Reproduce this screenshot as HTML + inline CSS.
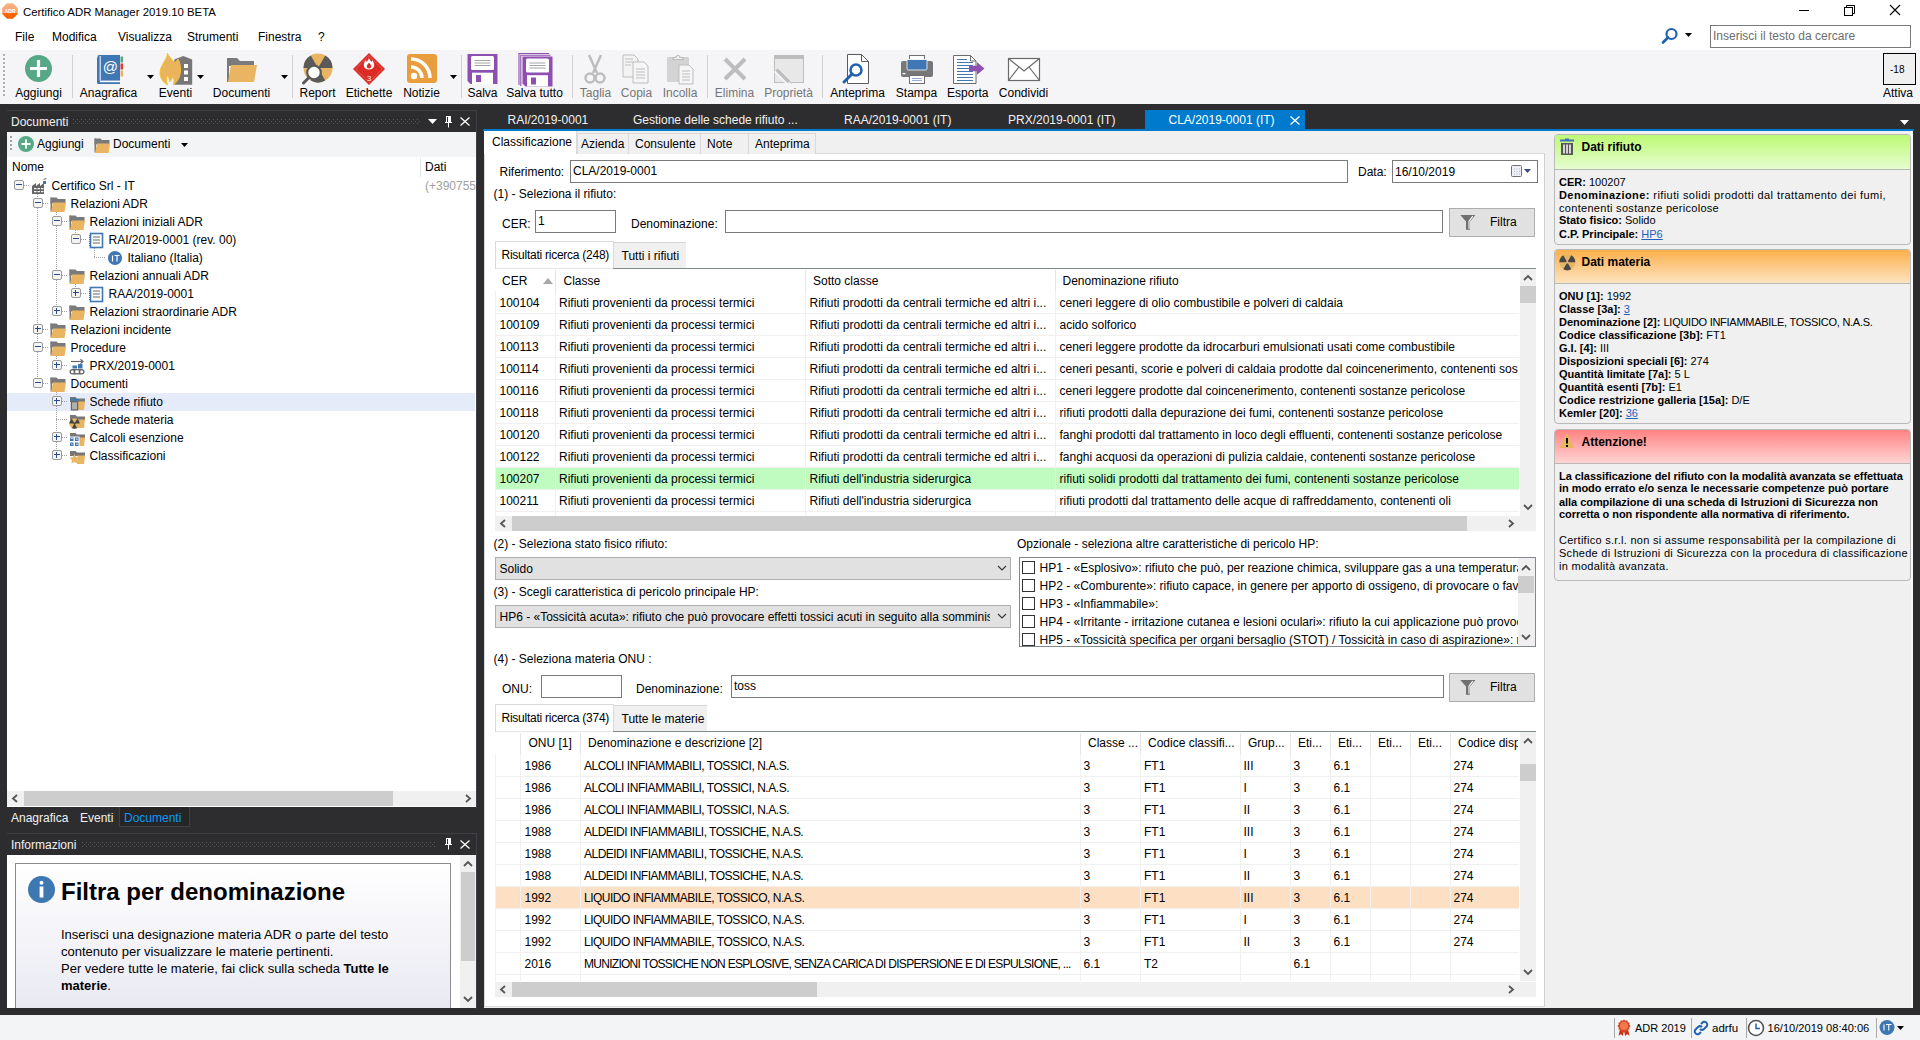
<!DOCTYPE html><html><head><meta charset="utf-8"><title>Certifico ADR Manager</title><style>
*{margin:0;padding:0;box-sizing:border-box}
html,body{width:1920px;height:1040px;overflow:hidden;background:#2d2d30;font-family:"Liberation Sans",sans-serif;font-size:12px;color:#000}
.a{position:absolute}
.t{position:absolute;white-space:nowrap;line-height:16px}
.clip{position:absolute;overflow:hidden}
svg{display:block}
</style></head><body><div class="a" style="left:0px;top:0px;width:1920px;height:50px;background:#fff"></div><svg class="a" style="left:2px;top:3px" width="16" height="16" viewBox="0 0 16 16"><defs><linearGradient id="gi" x1="0" y1="0" x2="0" y2="1"><stop offset="0" stop-color="#fbb68a"/><stop offset="0.6" stop-color="#f79a5e"/><stop offset="0.62" stop-color="#ff6a0a"/><stop offset="1" stop-color="#f06005"/></linearGradient></defs><path d="M5 0.3H11L15.7 5V11L11 15.7H5L0.3 11V5z" fill="url(#gi)"/><text x="8" y="9.6" font-size="5.2" font-family="Liberation Sans" font-weight="700" fill="#fff" text-anchor="middle">ADR</text></svg><div class="t" style="left:23px;top:4.05px;font-size:11.4px;color:#000;font-weight:400;">Certifico ADR Manager 2019.10 BETA</div><div class="a" style="left:1799px;top:10px;width:10px;height:1px;background:#000"></div><svg class="a" style="left:1843px;top:4px" width="13" height="12" viewBox="0 0 13 12"><rect x="1.5" y="3.5" width="8" height="8" fill="none" stroke="#000"/><path d="M3.5 3.5V1.5h8v8h-2" fill="none" stroke="#000"/></svg><svg class="a" style="left:1889px;top:4px" width="12" height="12" viewBox="0 0 12 12"><path d="M1 1L11 11M11 1L1 11" stroke="#000" stroke-width="1.1"/></svg><div class="t" style="left:15px;top:28.84px;font-size:12px;color:#000;font-weight:400;">File</div><div class="t" style="left:52px;top:28.84px;font-size:12px;color:#000;font-weight:400;">Modifica</div><div class="t" style="left:118px;top:28.84px;font-size:12px;color:#000;font-weight:400;">Visualizza</div><div class="t" style="left:187px;top:28.84px;font-size:12px;color:#000;font-weight:400;">Strumenti</div><div class="t" style="left:258px;top:28.84px;font-size:12px;color:#000;font-weight:400;">Finestra</div><div class="t" style="left:318px;top:28.84px;font-size:12px;color:#000;font-weight:400;">?</div><svg class="a" style="left:1661px;top:27px" width="18" height="18" viewBox="0 0 18 18"><circle cx="10.5" cy="7" r="5" fill="none" stroke="#1f63b0" stroke-width="2.2"/><path d="M7 10.5L2 15.5" stroke="#1f63b0" stroke-width="2.8" stroke-linecap="round"/></svg><svg class="a" style="left:1685px;top:33px" width="7" height="4" viewBox="0 0 7 4"><path d="M0 0H7L3.5 4z" fill="#000"/></svg><div class="a" style="left:1710px;top:25px;width:201px;height:23px;border:1px solid #7a7a7a;background:#fff"></div><div class="t" style="left:1713px;top:27.84px;font-size:12px;color:#6d6d6d;font-weight:400;">Inserisci il testo da cercare</div><div class="a" style="left:0px;top:50px;width:1920px;height:54px;background:#f5f5f7"></div><div class="a" style="left:3px;top:54px;width:2px;height:42px;background:repeating-linear-gradient(#b0b0b0 0 2px,transparent 2px 4px)"></div><div class="a" style="left:72px;top:55px;width:1px;height:43px;background:#d0d0d4"></div><div class="a" style="left:292px;top:55px;width:1px;height:43px;background:#d0d0d4"></div><div class="a" style="left:461px;top:55px;width:1px;height:43px;background:#d0d0d4"></div><div class="a" style="left:572px;top:55px;width:1px;height:43px;background:#d0d0d4"></div><div class="a" style="left:707px;top:55px;width:1px;height:43px;background:#d0d0d4"></div><div class="a" style="left:822px;top:55px;width:1px;height:43px;background:#d0d0d4"></div><svg class="a" style="left:23px;top:53px" width="32" height="32" viewBox="0 0 32 32"><circle cx="15.5" cy="15.5" r="13.5" fill="#57a886"/><path d="M15.5 7v17M7 15.5h17" stroke="#fff" stroke-width="3.2"/></svg><div class="t" style="left:-21.5px;width:120px;text-align:center;top:85px"><span style="color:#000">Aggiungi</span></div><svg class="a" style="left:95px;top:53px" width="32" height="32" viewBox="0 0 32 32"><path d="M2.5 3.5a1.5 1.5 0 0 1 1.5-1.5H25v26H4a1.5 1.5 0 0 0-1.5 1.5z" fill="#3f77b5"/><path d="M2 5v24.5a1.5 1.5 0 0 0 1.5 1.5H25v-2.5H5V3z" fill="#3f77b5"/><rect x="5" y="27.6" width="20" height="1.6" fill="#fff"/><path d="M5.2 3v24.5" stroke="#fff" stroke-width="1"/><rect x="25.5" y="3.5" width="2.6" height="6" fill="#57a886"/><rect x="25.5" y="10.5" width="2.6" height="6" fill="#d9412c"/><rect x="25.5" y="17.5" width="2.6" height="6" fill="#e9b563"/><text x="15.3" y="18.6" font-size="15" font-family="Liberation Sans" fill="#fff" text-anchor="middle">@</text></svg><div class="t" style="left:48.5px;width:120px;text-align:center;top:85px"><span style="color:#000">Anagrafica</span></div><svg class="a" style="left:147px;top:75px" width="7" height="4" viewBox="0 0 7 4"><path d="M0 0H7L3.5 4z" fill="#000"/></svg><svg class="a" style="left:159px;top:52px" width="34" height="34" viewBox="0 0 34 34"><path d="M15.3 7.4L24.3 4L33.2 7.4V32.7H15.3z" fill="#777"/><rect x="25" y="12" width="4" height="4" fill="#fff"/><rect x="25" y="18.5" width="4" height="4" fill="#fff"/><rect x="25" y="25" width="4" height="4" fill="#fff"/><path d="M8.5 1.2C10 5 13 7.5 15.5 10.5c1.5-1 3-2.5 3.5-3.5 2 3 2.8 8 2.5 12-.3 5.5-2.5 10.5-7.2 14 .8-3 1-6-.3-8.5-1 2.5-2 4-3.5 5.5 0-2.5-.5-4.5-2-6.5C7 26 7.5 30 8.5 33c-4.5-2.5-7.3-7-7.5-11.5-.2-5 2.5-9 4.5-12.5 1.5-2.5 3-5 3-7.8z" fill="#eab35c" stroke="#f3c230" stroke-width="0.9"/></svg><div class="t" style="left:115.5px;width:120px;text-align:center;top:85px"><span style="color:#000">Eventi</span></div><svg class="a" style="left:197px;top:75px" width="7" height="4" viewBox="0 0 7 4"><path d="M0 0H7L3.5 4z" fill="#000"/></svg><svg class="a" style="left:226px;top:53px" width="32" height="32" viewBox="0 0 32 32"><path d="M1 5h10l3 3h14v5H1z" fill="#7a7a7a"/><path d="M1 5h2v24H1z" fill="#7a7a7a"/><path d="M5 12h26l-3 17H2z" fill="#e9b563"/></svg><div class="t" style="left:181.5px;width:120px;text-align:center;top:85px"><span style="color:#000">Documenti</span></div><svg class="a" style="left:281px;top:75px" width="7" height="4" viewBox="0 0 7 4"><path d="M0 0H7L3.5 4z" fill="#000"/></svg><svg class="a" style="left:301px;top:53px" width="32" height="32" viewBox="0 0 32 32"><circle cx="17" cy="15" r="14.5" fill="#e9b563"/><path d="M17 15L2.50 15.00A14.5 14.5 0 0 1 9.75 2.44z" fill="#5a5a5a"/><path d="M17 15L24.25 2.44A14.5 14.5 0 0 1 31.50 15.00z" fill="#5a5a5a"/><path d="M17 15L24.25 27.56A14.5 14.5 0 0 1 9.75 27.56z" fill="#5a5a5a"/><circle cx="13" cy="19.5" r="6.8" fill="#fff" stroke="#5a5a5a" stroke-width="2.2"/><path d="M8 24.5L2.5 30" stroke="#5a5a5a" stroke-width="3" stroke-linecap="round"/></svg><div class="t" style="left:257.5px;width:120px;text-align:center;top:85px"><span style="color:#000">Report</span></div><svg class="a" style="left:353px;top:53px" width="32" height="32" viewBox="0 0 32 32"><path d="M16 0L32 16L16 32L0 16z" fill="#dc2a24"/><path d="M16 2.6L29.4 16L16 29.4L2.6 16z" fill="none" stroke="#f3a0a0" stroke-width="0.7" stroke-dasharray="1 0.8"/><path d="M16 4.5c.3 2.2 1.5 3 2.6 4.5.3-.8.4-1.5.4-2 1.6 1.8 2.4 3.6 2.2 5.6-.3 2.4-2.3 4-5.2 4s-5-1.6-5.2-4c-.2-2 .7-3.8 2.2-5.6 0 .7.2 1.3.5 2 1-1.5 2.3-2.4 2.5-4.5z" fill="#fff"/><path d="M16 9.8c1.3 1.3 2.4 2.6 2.2 4-.2 1-1 1.6-2.2 1.6s-2-.6-2.2-1.6c-.2-1.4.9-2.7 2.2-4z" fill="#dc2a24"/><text x="16.2" y="27.5" font-size="7.5" font-family="Liberation Sans" fill="#fff" text-anchor="middle">3</text></svg><div class="t" style="left:309px;width:120px;text-align:center;top:85px"><span style="color:#000">Etichette</span></div><svg class="a" style="left:406px;top:53px" width="32" height="32" viewBox="0 0 32 32"><rect x="1" y="1" width="30" height="29" rx="3" fill="#e99d3c"/><circle cx="8" cy="23" r="3.2" fill="#fff"/><path d="M5 14a11 11 0 0 1 11 11" fill="none" stroke="#fff" stroke-width="3.5"/><path d="M5 6a19 19 0 0 1 19 19" fill="none" stroke="#fff" stroke-width="3.5"/></svg><div class="t" style="left:361.5px;width:120px;text-align:center;top:85px"><span style="color:#000">Notizie</span></div><svg class="a" style="left:450px;top:75px" width="7" height="4" viewBox="0 0 7 4"><path d="M0 0H7L3.5 4z" fill="#000"/></svg><svg class="a" style="left:466px;top:53px" width="34" height="34" viewBox="0 0 34 34"><path d="M1.5 1H31.5V31H4.5L1.5 28z" fill="#8e4fb0"/><rect x="5.0" y="3" width="23" height="14" rx="1.5" fill="#fff"/><path d="M8.5 7.5h16M8.5 10h16M8.5 12.5h16" stroke="#9a9a9a" stroke-width="0.9"/><rect x="6.0" y="19.7" width="21" height="11.3" fill="#fff"/><rect x="10.0" y="22" width="5" height="7" fill="#8e4fb0"/></svg><div class="t" style="left:422.5px;width:120px;text-align:center;top:85px"><span style="color:#000">Salva</span></div><svg class="a" style="left:518px;top:52px" width="36" height="36" viewBox="0 0 36 36"><path d="M1 33V1.5H31" fill="none" stroke="#8e4fb0" stroke-width="1.1"/><path d="M2.8 34V3.3H32.5" fill="none" stroke="#8e4fb0" stroke-width="1.1"/><path d="M4.5 4.5H34.5V34.5H7.5L4.5 31.5z" fill="#8e4fb0"/><rect x="8.0" y="6.5" width="23" height="14" rx="1.5" fill="#fff"/><path d="M11.5 11.0h16M11.5 13.5h16M11.5 16.0h16" stroke="#9a9a9a" stroke-width="0.9"/><rect x="9.0" y="23.2" width="21" height="11.3" fill="#fff"/><rect x="13.0" y="25.5" width="5" height="7" fill="#8e4fb0"/></svg><div class="t" style="left:474.5px;width:120px;text-align:center;top:85px"><span style="color:#000">Salva tutto</span></div><svg class="a" style="left:579px;top:53px" width="32" height="32" viewBox="0 0 32 32"><path d="M10 2L18 20M22 2L14 20" stroke="#bdbdbd" stroke-width="2.5"/><circle cx="11" cy="25" r="4.5" fill="none" stroke="#bdbdbd" stroke-width="2.5"/><circle cx="21" cy="25" r="4.5" fill="none" stroke="#bdbdbd" stroke-width="2.5"/></svg><div class="t" style="left:535.5px;width:120px;text-align:center;top:85px"><span style="color:#767676">Taglia</span></div><svg class="a" style="left:621px;top:53px" width="32" height="32" viewBox="0 0 32 32"><path d="M2 2h11l4 4v18H2z" fill="#f3f3f3" stroke="#bdbdbd"/><path d="M12 9h11l4 4v17H12z" fill="#f5f5f7" stroke="#bdbdbd"/><path d="M4 6h8M4 9h8M4 12h6M15 16h9M15 19h9M15 22h9M15 25h9" stroke="#bdbdbd"/></svg><div class="t" style="left:576.5px;width:120px;text-align:center;top:85px"><span style="color:#767676">Copia</span></div><svg class="a" style="left:665px;top:53px" width="32" height="32" viewBox="0 0 32 32"><rect x="2" y="4" width="22" height="25" rx="1" fill="#d3d3d3"/><path d="M8 6.5h10v-2h-3a2 2 0 0 0-4 0h-3z" fill="#f5f5f7" stroke="#b8b8b8" stroke-width="1.2"/><path d="M14 12h10l4 4v15H14z" fill="#f5f5f7" stroke="#bdbdbd"/><path d="M17 18h8M17 21h8M17 24h8M17 27h8" stroke="#bdbdbd"/></svg><div class="t" style="left:620px;width:120px;text-align:center;top:85px"><span style="color:#767676">Incolla</span></div><svg class="a" style="left:719px;top:53px" width="32" height="32" viewBox="0 0 32 32"><path d="M6 6L26 26M26 6L6 26" stroke="#bdbdbd" stroke-width="4"/></svg><div class="t" style="left:674.5px;width:120px;text-align:center;top:85px"><span style="color:#767676">Elimina</span></div><svg class="a" style="left:773px;top:53px" width="32" height="32" viewBox="0 0 32 32"><rect x="1.5" y="2.5" width="29" height="27" fill="#e8e8e8" stroke="#bdbdbd"/><rect x="1" y="2" width="30" height="4" fill="#bdbdbd"/><path d="M3 17L17 31" stroke="#f5f5f7" stroke-width="6"/><path d="M3.5 16.5L16 29" stroke="#bdbdbd" stroke-width="3.5"/><path d="M16 29l3 2-1-3z" fill="#bdbdbd"/></svg><div class="t" style="left:728.5px;width:120px;text-align:center;top:85px"><span style="color:#767676">Proprietà</span></div><svg class="a" style="left:840px;top:53px" width="32" height="32" viewBox="0 0 32 32"><path d="M7.5 1.5h14l7 7v22h-21z" fill="#fff" stroke="#5a5a5a"/><path d="M21.5 1.5v7h7" fill="none" stroke="#5a5a5a"/><circle cx="16" cy="17" r="5.5" fill="none" stroke="#1f63b0" stroke-width="2.5"/><path d="M12 21L4 29" stroke="#1f63b0" stroke-width="3" stroke-linecap="round"/></svg><div class="t" style="left:797.5px;width:120px;text-align:center;top:85px"><span style="color:#000">Anteprima</span></div><svg class="a" style="left:900px;top:53px" width="34" height="32" viewBox="0 0 34 32"><rect x="9.5" y="2.5" width="15" height="6" fill="#fff" stroke="#6f6f6f"/><rect x="1" y="8" width="32" height="16" rx="2" fill="#777"/><path d="M7 6.5h20v9a1.5 1.5 0 0 1-1.5 1.5h-17A1.5 1.5 0 0 1 7 15.5z" fill="#3f77b5" stroke="#fff" stroke-width="0.8"/><rect x="2.5" y="20" width="3" height="1.2" fill="#fff"/><rect x="9.5" y="22.5" width="15" height="8" fill="#fff" stroke="#6f6f6f"/><path d="M12 25.5h10M12 27.5h10" stroke="#8fb0d8"/></svg><div class="t" style="left:856.5px;width:120px;text-align:center;top:85px"><span style="color:#000">Stampa</span></div><svg class="a" style="left:952px;top:53px" width="34" height="32" viewBox="0 0 34 32"><path d="M1.5 2.5h17l5.5 5.5v22.5H1.5z" fill="#fff" stroke="#6a6a6a"/><path d="M18.5 2.5v5.5h5.5" fill="none" stroke="#6a6a6a"/><path d="M5 6.5h10M5 9.5h16M5 12.5h16M5 15.5h16M5 18.5h16M5 21.5h16M5 24.5h16M5 27.5h16" stroke="#3f77b5" stroke-width="1"/><path d="M17 12.8h8v-3.5l7.5 6.2-7.5 6.2v-3.5h-8z" fill="#8e4fb0"/></svg><div class="t" style="left:907.75px;width:120px;text-align:center;top:85px"><span style="color:#000">Esporta</span></div><svg class="a" style="left:1007px;top:57px" width="34" height="26" viewBox="0 0 34 26"><rect x="1.5" y="1.5" width="31" height="22" fill="#fff" stroke="#6a6a6a" stroke-width="1.2"/><path d="M1.5 1.5L17 14L32.5 1.5M1.5 23.5L12 10M32.5 23.5L22 10" fill="none" stroke="#6a6a6a" stroke-width="1.2"/></svg><div class="t" style="left:963.5px;width:120px;text-align:center;top:85px"><span style="color:#000">Condividi</span></div><div class="a" style="left:1883px;top:53px;width:33px;height:32px;border:1px solid #000;background:#f0f0f0"></div><div class="t" style="left:1890px;top:61.53px;font-size:10px;color:#000;font-weight:400;">-18</div><div class="t" style="left:1883px;top:84.84px;font-size:12px;color:#000;font-weight:400;">Attiva</div><div class="a" style="left:0px;top:1015px;width:1920px;height:25px;background:#f3f4f6"></div><div class="a" style="left:1614px;top:1018px;width:1px;height:20px;background:#a8a8a8"></div><div class="a" style="left:1691px;top:1018px;width:1px;height:20px;background:#a8a8a8"></div><div class="a" style="left:1746px;top:1018px;width:1px;height:20px;background:#a8a8a8"></div><div class="a" style="left:1876px;top:1018px;width:1px;height:20px;background:#a8a8a8"></div><svg class="a" style="left:1616px;top:1019px" width="16" height="17" viewBox="0 0 16 17"><path d="M4 10L2.5 16.5l2.5-1.2 1.8 1.7 1.2-5.5zM12 10l1.5 6.5-2.5-1.2-1.8 1.7-1.2-5.5z" fill="#c8341c"/><polygon points="14.60,7.00 13.22,8.40 13.72,10.30 11.82,10.82 11.30,12.72 9.40,12.22 8.00,13.60 6.60,12.22 4.70,12.72 4.18,10.82 2.28,10.30 2.78,8.40 1.40,7.00 2.78,5.60 2.28,3.70 4.18,3.18 4.70,1.28 6.60,1.78 8.00,0.40 9.40,1.78 11.30,1.28 11.82,3.18 13.72,3.70 13.22,5.60" fill="#d9482a"/><circle cx="8" cy="7" r="4" fill="#f07a4a"/></svg><div class="t" style="left:1635px;top:1020.19px;font-size:11px;color:#000;font-weight:400;">ADR 2019</div><svg class="a" style="left:1692px;top:1019px" width="18" height="18" viewBox="0 0 18 18"><path d="M9 5l2-2a3 3 0 0 1 4 4l-3 3a3 3 0 0 1-4 0M9 13l-2 2a3 3 0 0 1-4-4l3-3a3 3 0 0 1 4 0" fill="none" stroke="#1f63b0" stroke-width="2"/></svg><div class="t" style="left:1712px;top:1020.02px;font-size:11.5px;color:#000;font-weight:400;">adrfu</div><svg class="a" style="left:1747px;top:1019px" width="18" height="18" viewBox="0 0 18 18"><circle cx="9" cy="9" r="7.5" fill="#fff" stroke="#555" stroke-width="1.6"/><path d="M9 4.5V9.5H13" fill="none" stroke="#1f63b0" stroke-width="1.5"/></svg><div class="t" style="left:1767.5px;top:1020.15px;font-size:11.1px;color:#000;font-weight:400;">16/10/2019 08:40:06</div><svg class="a" style="left:1879px;top:1019px" width="16" height="17" viewBox="0 0 16 17"><circle cx="8" cy="8.5" r="7.5" fill="#3f77b5"/><path d="M5 5.5v6M7 5.5h5.5M9.75 5.5v6" stroke="#fff" stroke-width="1.1"/></svg><svg class="a" style="left:1897px;top:1026px" width="7" height="4" viewBox="0 0 7 4"><path d="M0 0H7L3.5 4z" fill="#000"/></svg><div class="a" style="left:7px;top:110px;width:470px;height:698px;border-top:1px solid #3f3f46;border-right:1px solid #3f3f46"></div><div class="t" style="left:11px;top:113.84px;font-size:12px;color:#f1f1f1;font-weight:400;">Documenti</div><svg class="a" style="left:73px;top:119px" width="347" height="5" viewBox="0 0 347 5"><defs><pattern id="gp1" width="4" height="4" patternUnits="userSpaceOnUse"><rect x="0" y="0" width="1" height="1" fill="#58585c"/><rect x="2" y="2" width="1" height="1" fill="#58585c"/></pattern></defs><rect width="347" height="5" fill="url(#gp1)"/></svg><svg class="a" style="left:428px;top:119px" width="9" height="5" viewBox="0 0 9 5"><path d="M0 0H9L4.5 5z" fill="#fff"/></svg><svg class="a" style="left:444px;top:116px" width="9" height="12" viewBox="0 0 9 12"><path d="M2 0.5h5M2.5 0.5v6M6.5 0.5v6M1 6.5h7M4.5 6.5v5" fill="none" stroke="#fff" stroke-width="1"/><rect x="4" y="1" width="2" height="5" fill="#fff"/></svg><svg class="a" style="left:460px;top:117px" width="10" height="9" viewBox="0 0 10 9"><path d="M0.5 0.5L9.5 8.5M9.5 0.5L0.5 8.5" stroke="#fff" stroke-width="1.3"/></svg><div class="a" style="left:7px;top:132px;width:469px;height:675px;background:#fff"></div><div class="a" style="left:7px;top:132px;width:469px;height:25px;background:#f3f4f6"></div><div class="a" style="left:10px;top:136px;width:2px;height:15px;background:repeating-linear-gradient(#a0a0a0 0 2px,transparent 2px 4px)"></div><svg class="a" style="left:18px;top:136px" width="16" height="16" viewBox="0 0 16 16"><circle cx="8" cy="8" r="8" fill="#57a886"/><path d="M8 3.5v9M3.5 8h9" stroke="#fff" stroke-width="2"/></svg><div class="t" style="left:37px;top:135.84px;font-size:12px;color:#000;font-weight:400;">Aggiungi</div><svg class="a" style="left:94px;top:137px" width="16" height="16" viewBox="0 0 16 16"><path d="M0.5 1.5h6l1.5 1.5h7.5v4.5H0.5z" fill="#7a7a7a"/><path d="M0.5 1.5h1.5v14H0.5z" fill="#7a7a7a"/><path d="M3 6.5h13l-1.5 9.5H1z" fill="#e9b563"/></svg><div class="t" style="left:113px;top:135.84px;font-size:12px;color:#000;font-weight:400;">Documenti</div><svg class="a" style="left:181px;top:143px" width="7" height="4" viewBox="0 0 7 4"><path d="M0 0H7L3.5 4z" fill="#000"/></svg><div class="t" style="left:12px;top:158.84px;font-size:12px;color:#000;font-weight:400;">Nome</div><div class="a" style="left:420px;top:158px;width:1px;height:19px;background:#e5e5e5"></div><div class="t" style="left:425px;top:158.84px;font-size:12px;color:#000;font-weight:400;">Dati</div><div class="clip" style="left:421px;top:176px;width:55px;height:20px"><div class="t" style="left:4px;top:1.84px;font-size:12px;color:#a0a0a0;font-weight:400;">(+3907559</div></div><div class="a" style="left:7px;top:393px;width:468px;height:18px;background:#e5ebf8"></div><div class="a" style="left:37px;top:194px;width:1px;height:190px;background:repeating-linear-gradient(#a0a0a0 0 1px,transparent 1px 2px)"></div><div class="a" style="left:56px;top:212px;width:1px;height:100px;background:repeating-linear-gradient(#a0a0a0 0 1px,transparent 1px 2px)"></div><div class="a" style="left:75px;top:230px;width:1px;height:10px;background:repeating-linear-gradient(#a0a0a0 0 1px,transparent 1px 2px)"></div><div class="a" style="left:94px;top:248px;width:1px;height:10px;background:repeating-linear-gradient(#a0a0a0 0 1px,transparent 1px 2px)"></div><div class="a" style="left:75px;top:284px;width:1px;height:10px;background:repeating-linear-gradient(#a0a0a0 0 1px,transparent 1px 2px)"></div><div class="a" style="left:56px;top:356px;width:1px;height:10px;background:repeating-linear-gradient(#a0a0a0 0 1px,transparent 1px 2px)"></div><div class="a" style="left:56px;top:392px;width:1px;height:64px;background:repeating-linear-gradient(#a0a0a0 0 1px,transparent 1px 2px)"></div><svg class="a" style="left:14px;top:180px" width="10" height="10" viewBox="0 0 10 10"><rect x="0.5" y="0.5" width="9" height="9" rx="1.5" fill="#f4f4f4" stroke="#9a9a9a"/><path d="M2 4.5h6" stroke="#2a4a90" stroke-width="1"/></svg><div class="a" style="left:24px;top:185px;width:6px;height:1px;background:repeating-linear-gradient(90deg,#a0a0a0 0 1px,transparent 1px 2px)"></div><svg class="a" style="left:31px;top:178px" width="16" height="17" viewBox="0 0 16 17"><path d="M1 16V8l4-3v3l4-3v3l4-3v11z" fill="#666"/><rect x="3" y="10" width="2.5" height="1.2" fill="#fff"/><rect x="6.5" y="10" width="2.5" height="1.2" fill="#fff"/><rect x="10" y="10" width="2.5" height="1.2" fill="#fff"/><rect x="3" y="13" width="2.5" height="1.2" fill="#fff"/><rect x="6.5" y="13" width="2.5" height="1.2" fill="#fff"/><rect x="10" y="13" width="2.5" height="1.2" fill="#fff"/><rect x="12" y="3" width="3" height="3" fill="#3f77b5"/><path d="M12.5 1.5l3-1" stroke="#666"/></svg><div class="t" style="left:51.5px;top:177.84px;font-size:12px;color:#000;font-weight:400;">Certifico Srl - IT</div><svg class="a" style="left:33px;top:198px" width="10" height="10" viewBox="0 0 10 10"><rect x="0.5" y="0.5" width="9" height="9" rx="1.5" fill="#f4f4f4" stroke="#9a9a9a"/><path d="M2 4.5h6" stroke="#2a4a90" stroke-width="1"/></svg><div class="a" style="left:43px;top:203px;width:6px;height:1px;background:repeating-linear-gradient(90deg,#a0a0a0 0 1px,transparent 1px 2px)"></div><svg class="a" style="left:50px;top:196px" width="16" height="17" viewBox="0 0 16 17"><path d="M0.5 1.5h6l1.5 1.5h7.5v4.5H0.5z" fill="#7a7a7a"/><path d="M0.5 1.5h1.5v14H0.5z" fill="#7a7a7a"/><path d="M3 6.5h13l-1.5 9.5H1z" fill="#e9b563"/></svg><div class="t" style="left:70.5px;top:195.84px;font-size:12px;color:#000;font-weight:400;">Relazioni ADR</div><svg class="a" style="left:52px;top:216px" width="10" height="10" viewBox="0 0 10 10"><rect x="0.5" y="0.5" width="9" height="9" rx="1.5" fill="#f4f4f4" stroke="#9a9a9a"/><path d="M2 4.5h6" stroke="#2a4a90" stroke-width="1"/></svg><div class="a" style="left:62px;top:221px;width:6px;height:1px;background:repeating-linear-gradient(90deg,#a0a0a0 0 1px,transparent 1px 2px)"></div><svg class="a" style="left:69px;top:214px" width="16" height="17" viewBox="0 0 16 17"><path d="M0.5 1.5h6l1.5 1.5h7.5v4.5H0.5z" fill="#7a7a7a"/><path d="M0.5 1.5h1.5v14H0.5z" fill="#7a7a7a"/><path d="M3 6.5h13l-1.5 9.5H1z" fill="#e9b563"/></svg><div class="t" style="left:89.5px;top:213.84px;font-size:12px;color:#000;font-weight:400;">Relazioni iniziali ADR</div><svg class="a" style="left:71px;top:234px" width="10" height="10" viewBox="0 0 10 10"><rect x="0.5" y="0.5" width="9" height="9" rx="1.5" fill="#f4f4f4" stroke="#9a9a9a"/><path d="M2 4.5h6" stroke="#2a4a90" stroke-width="1"/></svg><div class="a" style="left:81px;top:239px;width:6px;height:1px;background:repeating-linear-gradient(90deg,#a0a0a0 0 1px,transparent 1px 2px)"></div><svg class="a" style="left:88px;top:232px" width="16" height="17" viewBox="0 0 16 17"><rect x="2.5" y="1.5" width="12" height="14" fill="#fff" stroke="#3f77b5" stroke-width="1.6"/><path d="M5 5h7M5 8h7M5 11h7" stroke="#666"/><path d="M1.5 3v11" stroke="#3f77b5" stroke-dasharray="1 1"/></svg><div class="t" style="left:108.5px;top:231.84px;font-size:12px;color:#000;font-weight:400;">RAI/2019-0001 (rev. 00)</div><div class="a" style="left:94px;top:257px;width:12px;height:1px;background:repeating-linear-gradient(90deg,#a0a0a0 0 1px,transparent 1px 2px)"></div><svg class="a" style="left:107px;top:250px" width="16" height="17" viewBox="0 0 16 17"><circle cx="8" cy="8" r="7" fill="#3f77b5"/><path d="M5.5 5.5v6M7.5 5.5h5M10 5.5v6" stroke="#fff" stroke-width="1.2"/></svg><div class="t" style="left:127.5px;top:249.84px;font-size:12px;color:#000;font-weight:400;">Italiano (Italia)</div><svg class="a" style="left:52px;top:270px" width="10" height="10" viewBox="0 0 10 10"><rect x="0.5" y="0.5" width="9" height="9" rx="1.5" fill="#f4f4f4" stroke="#9a9a9a"/><path d="M2 4.5h6" stroke="#2a4a90" stroke-width="1"/></svg><div class="a" style="left:62px;top:275px;width:6px;height:1px;background:repeating-linear-gradient(90deg,#a0a0a0 0 1px,transparent 1px 2px)"></div><svg class="a" style="left:69px;top:268px" width="16" height="17" viewBox="0 0 16 17"><path d="M0.5 1.5h6l1.5 1.5h7.5v4.5H0.5z" fill="#7a7a7a"/><path d="M0.5 1.5h1.5v14H0.5z" fill="#7a7a7a"/><path d="M3 6.5h13l-1.5 9.5H1z" fill="#e9b563"/></svg><div class="t" style="left:89.5px;top:267.84px;font-size:12px;color:#000;font-weight:400;">Relazioni annuali ADR</div><svg class="a" style="left:71px;top:288px" width="10" height="10" viewBox="0 0 10 10"><rect x="0.5" y="0.5" width="9" height="9" rx="1.5" fill="#f4f4f4" stroke="#9a9a9a"/><path d="M2 4.5h6M4.5 2v6" stroke="#2a4a90" stroke-width="1"/></svg><div class="a" style="left:81px;top:293px;width:6px;height:1px;background:repeating-linear-gradient(90deg,#a0a0a0 0 1px,transparent 1px 2px)"></div><svg class="a" style="left:88px;top:286px" width="16" height="17" viewBox="0 0 16 17"><rect x="2.5" y="1.5" width="12" height="14" fill="#fff" stroke="#3f77b5" stroke-width="1.6"/><path d="M5 5h7M5 8h7M5 11h7" stroke="#666"/><path d="M1.5 3v11" stroke="#3f77b5" stroke-dasharray="1 1"/></svg><div class="t" style="left:108.5px;top:285.84px;font-size:12px;color:#000;font-weight:400;">RAA/2019-0001</div><svg class="a" style="left:52px;top:306px" width="10" height="10" viewBox="0 0 10 10"><rect x="0.5" y="0.5" width="9" height="9" rx="1.5" fill="#f4f4f4" stroke="#9a9a9a"/><path d="M2 4.5h6M4.5 2v6" stroke="#2a4a90" stroke-width="1"/></svg><div class="a" style="left:62px;top:311px;width:6px;height:1px;background:repeating-linear-gradient(90deg,#a0a0a0 0 1px,transparent 1px 2px)"></div><svg class="a" style="left:69px;top:304px" width="16" height="17" viewBox="0 0 16 17"><path d="M0.5 1.5h6l1.5 1.5h7.5v4.5H0.5z" fill="#7a7a7a"/><path d="M0.5 1.5h1.5v14H0.5z" fill="#7a7a7a"/><path d="M3 6.5h13l-1.5 9.5H1z" fill="#e9b563"/></svg><div class="t" style="left:89.5px;top:303.84px;font-size:12px;color:#000;font-weight:400;">Relazioni straordinarie ADR</div><svg class="a" style="left:33px;top:324px" width="10" height="10" viewBox="0 0 10 10"><rect x="0.5" y="0.5" width="9" height="9" rx="1.5" fill="#f4f4f4" stroke="#9a9a9a"/><path d="M2 4.5h6M4.5 2v6" stroke="#2a4a90" stroke-width="1"/></svg><div class="a" style="left:43px;top:329px;width:6px;height:1px;background:repeating-linear-gradient(90deg,#a0a0a0 0 1px,transparent 1px 2px)"></div><svg class="a" style="left:50px;top:322px" width="16" height="17" viewBox="0 0 16 17"><path d="M0.5 1.5h6l1.5 1.5h7.5v4.5H0.5z" fill="#7a7a7a"/><path d="M0.5 1.5h1.5v14H0.5z" fill="#7a7a7a"/><path d="M3 6.5h13l-1.5 9.5H1z" fill="#e9b563"/></svg><div class="t" style="left:70.5px;top:321.84px;font-size:12px;color:#000;font-weight:400;">Relazioni incidente</div><svg class="a" style="left:33px;top:342px" width="10" height="10" viewBox="0 0 10 10"><rect x="0.5" y="0.5" width="9" height="9" rx="1.5" fill="#f4f4f4" stroke="#9a9a9a"/><path d="M2 4.5h6" stroke="#2a4a90" stroke-width="1"/></svg><div class="a" style="left:43px;top:347px;width:6px;height:1px;background:repeating-linear-gradient(90deg,#a0a0a0 0 1px,transparent 1px 2px)"></div><svg class="a" style="left:50px;top:340px" width="16" height="17" viewBox="0 0 16 17"><path d="M0.5 1.5h6l1.5 1.5h7.5v4.5H0.5z" fill="#7a7a7a"/><path d="M0.5 1.5h1.5v14H0.5z" fill="#7a7a7a"/><path d="M3 6.5h13l-1.5 9.5H1z" fill="#e9b563"/></svg><div class="t" style="left:70.5px;top:339.84px;font-size:12px;color:#000;font-weight:400;">Procedure</div><svg class="a" style="left:52px;top:360px" width="10" height="10" viewBox="0 0 10 10"><rect x="0.5" y="0.5" width="9" height="9" rx="1.5" fill="#f4f4f4" stroke="#9a9a9a"/><path d="M2 4.5h6M4.5 2v6" stroke="#2a4a90" stroke-width="1"/></svg><div class="a" style="left:62px;top:365px;width:6px;height:1px;background:repeating-linear-gradient(90deg,#a0a0a0 0 1px,transparent 1px 2px)"></div><svg class="a" style="left:69px;top:358px" width="16" height="17" viewBox="0 0 16 17"><path d="M2 3.5h11.5" stroke="#666" stroke-width="1.2"/><path d="M11.5 1.3l2.5 2.2-2.5 2.2" fill="none" stroke="#666" stroke-width="1.2"/><rect x="3.5" y="7.5" width="4.5" height="3" fill="#3f77b5"/><rect x="9" y="6" width="4.5" height="4.5" fill="#3f77b5"/><rect x="0.5" y="11" width="15" height="5.5" rx="2.7" fill="#666"/><circle cx="3.3" cy="13.7" r="1.5" fill="#fff"/><rect x="6.3" y="12.3" width="3.4" height="2.8" fill="#fff"/><circle cx="12.7" cy="13.7" r="1.5" fill="#fff"/></svg><div class="t" style="left:89.5px;top:357.84px;font-size:12px;color:#000;font-weight:400;">PRX/2019-0001</div><svg class="a" style="left:33px;top:378px" width="10" height="10" viewBox="0 0 10 10"><rect x="0.5" y="0.5" width="9" height="9" rx="1.5" fill="#f4f4f4" stroke="#9a9a9a"/><path d="M2 4.5h6" stroke="#2a4a90" stroke-width="1"/></svg><div class="a" style="left:43px;top:383px;width:6px;height:1px;background:repeating-linear-gradient(90deg,#a0a0a0 0 1px,transparent 1px 2px)"></div><svg class="a" style="left:50px;top:376px" width="16" height="17" viewBox="0 0 16 17"><path d="M0.5 1.5h6l1.5 1.5h7.5v4.5H0.5z" fill="#7a7a7a"/><path d="M0.5 1.5h1.5v14H0.5z" fill="#7a7a7a"/><path d="M3 6.5h13l-1.5 9.5H1z" fill="#e9b563"/></svg><div class="t" style="left:70.5px;top:375.84px;font-size:12px;color:#000;font-weight:400;">Documenti</div><svg class="a" style="left:52px;top:396px" width="10" height="10" viewBox="0 0 10 10"><rect x="0.5" y="0.5" width="9" height="9" rx="1.5" fill="#f4f4f4" stroke="#9a9a9a"/><path d="M2 4.5h6M4.5 2v6" stroke="#2a4a90" stroke-width="1"/></svg><div class="a" style="left:62px;top:401px;width:6px;height:1px;background:repeating-linear-gradient(90deg,#a0a0a0 0 1px,transparent 1px 2px)"></div><svg class="a" style="left:69px;top:394px" width="16" height="17" viewBox="0 0 16 17"><path d="M1 3h5.5l1.5 1.5H16v3.5H1z" fill="#777"/><path d="M8.5 7.5H16l-1 8.5H8z" fill="#e9b563"/><rect x="1" y="5" width="9" height="1.6" fill="#3f77b5"/><rect x="4" y="4" width="3" height="1.2" fill="#3f77b5"/><rect x="1.8" y="7" width="7.4" height="9.5" fill="#666"/><rect x="3" y="8.3" width="5" height="7" fill="#b0b0b0"/></svg><div class="t" style="left:89.5px;top:393.84px;font-size:12px;color:#000;font-weight:400;">Schede rifiuto</div><div class="a" style="left:56px;top:419px;width:12px;height:1px;background:repeating-linear-gradient(90deg,#a0a0a0 0 1px,transparent 1px 2px)"></div><svg class="a" style="left:69px;top:412px" width="16" height="17" viewBox="0 0 16 17"><path d="M1 3h5.5l1.5 1.5H16v3.5H1z" fill="#777"/><path d="M8.5 7.5H16l-1 8.5H8z" fill="#e9b563"/><circle cx="5.5" cy="11.5" r="5.2" fill="#e9b563"/><path d="M5.5 11.5L0.30 11.50A5.2 5.2 0 0 1 2.90 7.00z" fill="#444"/><path d="M5.5 11.5L8.10 7.00A5.2 5.2 0 0 1 10.70 11.50z" fill="#444"/><path d="M5.5 11.5L8.10 16.00A5.2 5.2 0 0 1 2.90 16.00z" fill="#444"/><circle cx="5.5" cy="11.5" r="1.1" fill="#444"/></svg><div class="t" style="left:89.5px;top:411.84px;font-size:12px;color:#000;font-weight:400;">Schede materia</div><svg class="a" style="left:52px;top:432px" width="10" height="10" viewBox="0 0 10 10"><rect x="0.5" y="0.5" width="9" height="9" rx="1.5" fill="#f4f4f4" stroke="#9a9a9a"/><path d="M2 4.5h6M4.5 2v6" stroke="#2a4a90" stroke-width="1"/></svg><div class="a" style="left:62px;top:437px;width:6px;height:1px;background:repeating-linear-gradient(90deg,#a0a0a0 0 1px,transparent 1px 2px)"></div><svg class="a" style="left:69px;top:430px" width="16" height="17" viewBox="0 0 16 17"><path d="M1 3h5.5l1.5 1.5H16v3.5H1z" fill="#777"/><path d="M8.5 7.5H16l-1 8.5H8z" fill="#e9b563"/><rect x="0.5" y="6.5" width="10" height="10" fill="#fff"/><path d="M1 7.5h3.5v3.5H1zM6 7.5h3.5v3.5H6zM1 12.5h3.5v3.5H1zM6 12.5h3.5v3.5H6z" fill="#3f77b5"/><path d="M1.8 8.5h2M6.8 9.2h2M2.2 13.5l1.2 1.5M7 14.2h2" stroke="#fff" stroke-width="0.8"/></svg><div class="t" style="left:89.5px;top:429.84px;font-size:12px;color:#000;font-weight:400;">Calcoli esenzione</div><svg class="a" style="left:52px;top:450px" width="10" height="10" viewBox="0 0 10 10"><rect x="0.5" y="0.5" width="9" height="9" rx="1.5" fill="#f4f4f4" stroke="#9a9a9a"/><path d="M2 4.5h6M4.5 2v6" stroke="#2a4a90" stroke-width="1"/></svg><div class="a" style="left:62px;top:455px;width:6px;height:1px;background:repeating-linear-gradient(90deg,#a0a0a0 0 1px,transparent 1px 2px)"></div><svg class="a" style="left:69px;top:448px" width="16" height="17" viewBox="0 0 16 17"><path d="M1 3h5.5l1.5 1.5H16v3.5H1z" fill="#777"/><path d="M8.5 7.5H16l-1 8.5H8z" fill="#e9b563"/><path d="M5.5 6l1.5 3.2 3.5.5-2.5 2.4.6 3.5-3.1-1.7-3.1 1.7.6-3.5L0.5 9.7l3.5-.5z" fill="#e9b563"/></svg><div class="t" style="left:89.5px;top:447.84px;font-size:12px;color:#000;font-weight:400;">Classificazioni</div><div class="a" style="left:7px;top:791px;width:469px;height:15px;background:#f0f0f0"></div><div class="a" style="left:24px;top:791px;width:369px;height:15px;background:#cdcdcd"></div><svg class="a" style="left:11px;top:794px" width="8" height="9" viewBox="0 0 8 9"><path d="M6 1L2 4.5 6 8" fill="none" stroke="#555" stroke-width="1.8"/></svg><svg class="a" style="left:464px;top:794px" width="8" height="9" viewBox="0 0 8 9"><path d="M2 1L6 4.5 2 8" fill="none" stroke="#555" stroke-width="1.8"/></svg><div class="a" style="left:119px;top:807px;width:71px;height:20px;background:#252526;border:1px solid #3f3f46;border-top:none"></div><div class="t" style="left:11px;top:809.84px;font-size:12px;color:#f1f1f1;font-weight:400;">Anagrafica</div><div class="t" style="left:80px;top:809.84px;font-size:12px;color:#f1f1f1;font-weight:400;">Eventi</div><div class="t" style="left:124px;top:809.84px;font-size:12px;color:#0f97f5;font-weight:400;">Documenti</div><div class="a" style="left:7px;top:833px;width:470px;height:176px;border-top:1px solid #3f3f46;border-right:1px solid #3f3f46"></div><div class="t" style="left:11px;top:836.84px;font-size:12px;color:#f1f1f1;font-weight:400;">Informazioni</div><svg class="a" style="left:82px;top:842px" width="354" height="5" viewBox="0 0 354 5"><defs><pattern id="gp2" width="4" height="4" patternUnits="userSpaceOnUse"><rect x="0" y="0" width="1" height="1" fill="#58585c"/><rect x="2" y="2" width="1" height="1" fill="#58585c"/></pattern></defs><rect width="354" height="5" fill="url(#gp2)"/></svg><svg class="a" style="left:444px;top:838px" width="9" height="12" viewBox="0 0 9 12"><path d="M2 0.5h5M2.5 0.5v6M6.5 0.5v6M1 6.5h7M4.5 6.5v5" fill="none" stroke="#fff" stroke-width="1"/><rect x="4" y="1" width="2" height="5" fill="#fff"/></svg><svg class="a" style="left:460px;top:840px" width="10" height="9" viewBox="0 0 10 9"><path d="M0.5 0.5L9.5 8.5M9.5 0.5L0.5 8.5" stroke="#fff" stroke-width="1.3"/></svg><div class="a" style="left:7px;top:855px;width:469px;height:153px;background:#fff"></div><div class="clip" style="left:15px;top:863px;width:436px;height:145px;border:1px solid #8c8c8c;border-bottom:none;background:linear-gradient(#ffffff,#e8e8f2 150px)"></div><svg class="a" style="left:28px;top:876px" width="27" height="27" viewBox="0 0 27 27"><circle cx="13.5" cy="13.5" r="13.5" fill="#3d78b3"/><rect x="11.6" y="10.5" width="3.8" height="11" fill="#fff"/><circle cx="13.5" cy="6.8" r="2" fill="#fff"/></svg><div class="t" style="left:61px;top:883.68px;font-size:24px;color:#000;font-weight:700;">Filtra per denominazione</div><div class="t" style="left:61px;top:926.50px;font-size:13px;color:#000;font-weight:400;">Inserisci una designazione materia ADR o parte del testo</div><div class="t" style="left:61px;top:943.50px;font-size:13px;color:#000;font-weight:400;">contenuto per visualizzare le materie pertinenti.</div><div class="t" style="left:61px;top:960.50px;font-size:13px;color:#000;font-weight:400;">Per vedere tutte le materie, fai click sulla scheda <b>Tutte le</b></div><div class="t" style="left:61px;top:977.50px;font-size:13px;color:#000;font-weight:400;"><b>materie</b>.</div><div class="a" style="left:460px;top:855px;width:16px;height:153px;background:#f0f0f0"></div><div class="a" style="left:461px;top:872px;width:14px;height:89px;background:#cdcdcd"></div><svg class="a" style="left:463px;top:860px" width="10" height="7" viewBox="0 0 10 7"><path d="M1 6L5 2 9 6" fill="none" stroke="#555" stroke-width="1.8"/></svg><svg class="a" style="left:463px;top:996px" width="10" height="7" viewBox="0 0 10 7"><path d="M1 1L5 5 9 1" fill="none" stroke="#555" stroke-width="1.8"/></svg><div class="t" style="left:507.5px;top:111.84px;font-size:12px;color:#f1f1f1;font-weight:400;">RAI/2019-0001</div><div class="t" style="left:633px;top:111.84px;font-size:12px;color:#f1f1f1;font-weight:400;">Gestione delle schede rifiuto ...</div><div class="t" style="left:844px;top:111.84px;font-size:12px;color:#f1f1f1;font-weight:400;">RAA/2019-0001 (IT)</div><div class="t" style="left:1008px;top:111.84px;font-size:12px;color:#f1f1f1;font-weight:400;">PRX/2019-0001 (IT)</div><div class="a" style="left:1145px;top:110px;width:160px;height:20px;background:#007acc"></div><div class="t" style="left:1168.5px;top:111.84px;font-size:12px;color:#fff;font-weight:400;">CLA/2019-0001 (IT)</div><svg class="a" style="left:1290px;top:116px" width="10" height="9" viewBox="0 0 10 9"><path d="M0.5 0.5L9.5 8.5M9.5 0.5L0.5 8.5" stroke="#fff" stroke-width="1.3"/></svg><svg class="a" style="left:1900px;top:120px" width="9" height="5" viewBox="0 0 9 5"><path d="M0 0H9L4.5 5z" fill="#fff"/></svg><div class="a" style="left:483px;top:129px;width:1431px;height:2px;background:#007acc"></div><div class="a" style="left:484px;top:131px;width:1429px;height:877px;background:#f0f0f0"></div><div class="a" style="left:1911px;top:131px;width:2px;height:877px;background:#fafafa"></div><div class="a" style="left:484px;top:131px;width:1061px;height:23px;background:#f0f0f0"></div><div class="a" style="left:484px;top:153px;width:1061px;height:854px;background:#fff;border:1px solid #d9d9d9;border-right-color:#d0d0d0"></div><div class="a" style="left:484px;top:131px;width:93px;height:23px;background:#fff;border-right:1px solid #d9d9d9"></div><div class="t" style="left:492px;top:133.84px;font-size:12px;color:#000;font-weight:400;">Classificazione</div><div class="a" style="left:577px;top:133px;width:52px;height:21px;background:#f0f0f0;border:1px solid #d9d9d9;border-bottom:none"></div><div class="t" style="left:581px;top:135.84px;font-size:12px;color:#000;font-weight:400;">Azienda</div><div class="a" style="left:628px;top:133px;width:73px;height:21px;background:#f0f0f0;border:1px solid #d9d9d9;border-bottom:none"></div><div class="t" style="left:635px;top:135.84px;font-size:12px;color:#000;font-weight:400;">Consulente</div><div class="a" style="left:700px;top:133px;width:49px;height:21px;background:#f0f0f0;border:1px solid #d9d9d9;border-bottom:none"></div><div class="t" style="left:707px;top:135.84px;font-size:12px;color:#000;font-weight:400;">Note</div><div class="a" style="left:748px;top:133px;width:68px;height:21px;background:#f0f0f0;border:1px solid #d9d9d9;border-bottom:none"></div><div class="t" style="left:755px;top:135.84px;font-size:12px;color:#000;font-weight:400;">Anteprima</div><div class="t" style="left:499.5px;top:163.84px;font-size:12px;color:#000;font-weight:400;">Riferimento:</div><div class="a" style="left:570px;top:160px;width:778px;height:23px;background:#fff;border:1px solid #7a7a7a"></div><div class="t" style="left:573px;top:162.84px;font-size:12px;color:#000;font-weight:400;">CLA/2019-0001</div><div class="t" style="left:1358px;top:163.84px;font-size:12px;color:#000;font-weight:400;">Data:</div><div class="a" style="left:1392px;top:160px;width:146px;height:23px;background:#fff;border:1px solid #7a7a7a"></div><div class="t" style="left:1395px;top:163.84px;font-size:12px;color:#000;font-weight:400;">16/10/2019</div><svg class="a" style="left:1510px;top:164px" width="24" height="14" viewBox="0 0 24 14"><rect x="1.5" y="1.5" width="10" height="11" rx="1" fill="#eef0f8" stroke="#7a6f6f"/><path d="M4 5h1M6.5 5h1M9 5h1M4 7.5h1M6.5 7.5h1M9 7.5h1M4 10h1M6.5 10h1M9 10h1" stroke="#b0b8c8"/><path d="M14 5h7l-3.5 4z" fill="#3c4c80"/></svg><div class="t" style="left:493.5px;top:185.84px;font-size:12px;color:#000;font-weight:400;">(1) - Seleziona il rifiuto:</div><div class="t" style="left:502px;top:215.84px;font-size:12px;color:#000;font-weight:400;">CER:</div><div class="a" style="left:535px;top:210px;width:81px;height:23px;background:#fff;border:1px solid #7a7a7a"></div><div class="t" style="left:538px;top:212.84px;font-size:12px;color:#000;font-weight:400;">1</div><div class="t" style="left:631px;top:215.84px;font-size:12px;color:#000;font-weight:400;">Denominazione:</div><div class="a" style="left:725px;top:210px;width:718px;height:23px;background:#fff;border:1px solid #7a7a7a"></div><div class="a" style="left:1449px;top:208px;width:86px;height:29px;background:#e1e1e1;border:1px solid #adadad"></div><svg class="a" style="left:1460px;top:213px" width="17" height="18" viewBox="0 0 17 18"><path d="M0.3 2H15.4L10 8.5V16.7H6V8.5z" fill="#707070"/><path d="M12.8 3.2L9 8.2V15.8" fill="none" stroke="#fff" stroke-width="1.1"/></svg><div class="t" style="left:1490px;top:213.84px;font-size:12px;color:#000;font-weight:400;">Filtra</div><div class="a" style="left:495px;top:241px;width:119px;height:28px;background:#fff;border:1px solid #d9d9d9;border-bottom:none"></div><div class="t" style="left:501.5px;top:247.34px;font-size:12px;color:#000;font-weight:400;letter-spacing:-0.25px">Risultati ricerca (248)</div><div class="a" style="left:614px;top:242px;width:72px;height:26px;background:#f0f0f0;border-top:1px solid #d6d6d6"></div><div class="t" style="left:621.5px;top:247.84px;font-size:12px;color:#000;font-weight:400;">Tutti i rifiuti</div><div class="a" style="left:613px;top:268px;width:923px;height:1px;background:#808a8c"></div><div class="a" style="left:496px;top:268px;width:117px;height:1px;background:#e6e6e6"></div><div class="a" style="left:495px;top:269px;width:1025px;height:247px;background:#fff"></div><div class="a" style="left:555px;top:270px;width:1px;height:21px;background:#e5e5e5"></div><div class="a" style="left:805px;top:270px;width:1px;height:21px;background:#e5e5e5"></div><div class="a" style="left:1055px;top:270px;width:1px;height:21px;background:#e5e5e5"></div><div class="clip" style="left:495px;top:269px;width:59px;height:22px"><div class="t" style="left:7px;top:3.84px;font-size:12px;color:#000;font-weight:400;">CER</div></div><div class="clip" style="left:555px;top:269px;width:249px;height:22px"><div class="t" style="left:8.5px;top:3.84px;font-size:12px;color:#000;font-weight:400;">Classe</div></div><div class="clip" style="left:805px;top:269px;width:249px;height:22px"><div class="t" style="left:8px;top:3.84px;font-size:12px;color:#000;font-weight:400;">Sotto classe</div></div><div class="clip" style="left:1055px;top:269px;width:463px;height:22px"><div class="t" style="left:7.5px;top:3.84px;font-size:12px;color:#000;font-weight:400;">Denominazione rifiuto</div></div><div class="a" style="left:495px;top:467px;width:1024px;height:22px;background:#c0fcc0"></div><div class="clip" style="left:495px;top:291px;width:59px;height:22px"><div class="t" style="left:4.5px;top:3.84px;font-size:12px;color:#000;font-weight:400;">100104</div></div><div class="clip" style="left:555px;top:291px;width:249px;height:22px"><div class="t" style="left:4px;top:3.84px;font-size:12px;color:#000;font-weight:400;">Rifiuti provenienti da processi termici</div></div><div class="clip" style="left:805px;top:291px;width:249px;height:22px"><div class="t" style="left:4.5px;top:3.84px;font-size:12px;color:#000;font-weight:400;">Rifiuti prodotti da centrali termiche ed altri i...</div></div><div class="clip" style="left:1055px;top:291px;width:463px;height:22px"><div class="t" style="left:4.5px;top:3.84px;font-size:12px;color:#000;font-weight:400;">ceneri leggere di olio combustibile e polveri di caldaia</div></div><div class="clip" style="left:495px;top:313px;width:59px;height:22px"><div class="t" style="left:4.5px;top:3.84px;font-size:12px;color:#000;font-weight:400;">100109</div></div><div class="clip" style="left:555px;top:313px;width:249px;height:22px"><div class="t" style="left:4px;top:3.84px;font-size:12px;color:#000;font-weight:400;">Rifiuti provenienti da processi termici</div></div><div class="clip" style="left:805px;top:313px;width:249px;height:22px"><div class="t" style="left:4.5px;top:3.84px;font-size:12px;color:#000;font-weight:400;">Rifiuti prodotti da centrali termiche ed altri i...</div></div><div class="clip" style="left:1055px;top:313px;width:463px;height:22px"><div class="t" style="left:4.5px;top:3.84px;font-size:12px;color:#000;font-weight:400;">acido solforico</div></div><div class="clip" style="left:495px;top:335px;width:59px;height:22px"><div class="t" style="left:4.5px;top:3.84px;font-size:12px;color:#000;font-weight:400;">100113</div></div><div class="clip" style="left:555px;top:335px;width:249px;height:22px"><div class="t" style="left:4px;top:3.84px;font-size:12px;color:#000;font-weight:400;">Rifiuti provenienti da processi termici</div></div><div class="clip" style="left:805px;top:335px;width:249px;height:22px"><div class="t" style="left:4.5px;top:3.84px;font-size:12px;color:#000;font-weight:400;">Rifiuti prodotti da centrali termiche ed altri i...</div></div><div class="clip" style="left:1055px;top:335px;width:463px;height:22px"><div class="t" style="left:4.5px;top:3.84px;font-size:12px;color:#000;font-weight:400;">ceneri leggere prodotte da idrocarburi emulsionati usati come combustibile</div></div><div class="clip" style="left:495px;top:357px;width:59px;height:22px"><div class="t" style="left:4.5px;top:3.84px;font-size:12px;color:#000;font-weight:400;">100114</div></div><div class="clip" style="left:555px;top:357px;width:249px;height:22px"><div class="t" style="left:4px;top:3.84px;font-size:12px;color:#000;font-weight:400;">Rifiuti provenienti da processi termici</div></div><div class="clip" style="left:805px;top:357px;width:249px;height:22px"><div class="t" style="left:4.5px;top:3.84px;font-size:12px;color:#000;font-weight:400;">Rifiuti prodotti da centrali termiche ed altri i...</div></div><div class="clip" style="left:1055px;top:357px;width:463px;height:22px"><div class="t" style="left:4.5px;top:3.84px;font-size:12px;color:#000;font-weight:400;">ceneri pesanti, scorie e polveri di caldaia prodotte dal coincenerimento, contenenti sostanze pericolose</div></div><div class="clip" style="left:495px;top:379px;width:59px;height:22px"><div class="t" style="left:4.5px;top:3.84px;font-size:12px;color:#000;font-weight:400;">100116</div></div><div class="clip" style="left:555px;top:379px;width:249px;height:22px"><div class="t" style="left:4px;top:3.84px;font-size:12px;color:#000;font-weight:400;">Rifiuti provenienti da processi termici</div></div><div class="clip" style="left:805px;top:379px;width:249px;height:22px"><div class="t" style="left:4.5px;top:3.84px;font-size:12px;color:#000;font-weight:400;">Rifiuti prodotti da centrali termiche ed altri i...</div></div><div class="clip" style="left:1055px;top:379px;width:463px;height:22px"><div class="t" style="left:4.5px;top:3.84px;font-size:12px;color:#000;font-weight:400;">ceneri leggere prodotte dal coincenerimento, contenenti sostanze pericolose</div></div><div class="clip" style="left:495px;top:401px;width:59px;height:22px"><div class="t" style="left:4.5px;top:3.84px;font-size:12px;color:#000;font-weight:400;">100118</div></div><div class="clip" style="left:555px;top:401px;width:249px;height:22px"><div class="t" style="left:4px;top:3.84px;font-size:12px;color:#000;font-weight:400;">Rifiuti provenienti da processi termici</div></div><div class="clip" style="left:805px;top:401px;width:249px;height:22px"><div class="t" style="left:4.5px;top:3.84px;font-size:12px;color:#000;font-weight:400;">Rifiuti prodotti da centrali termiche ed altri i...</div></div><div class="clip" style="left:1055px;top:401px;width:463px;height:22px"><div class="t" style="left:4.5px;top:3.84px;font-size:12px;color:#000;font-weight:400;">rifiuti prodotti dalla depurazione dei fumi, contenenti sostanze pericolose</div></div><div class="clip" style="left:495px;top:423px;width:59px;height:22px"><div class="t" style="left:4.5px;top:3.84px;font-size:12px;color:#000;font-weight:400;">100120</div></div><div class="clip" style="left:555px;top:423px;width:249px;height:22px"><div class="t" style="left:4px;top:3.84px;font-size:12px;color:#000;font-weight:400;">Rifiuti provenienti da processi termici</div></div><div class="clip" style="left:805px;top:423px;width:249px;height:22px"><div class="t" style="left:4.5px;top:3.84px;font-size:12px;color:#000;font-weight:400;">Rifiuti prodotti da centrali termiche ed altri i...</div></div><div class="clip" style="left:1055px;top:423px;width:463px;height:22px"><div class="t" style="left:4.5px;top:3.84px;font-size:12px;color:#000;font-weight:400;">fanghi prodotti dal trattamento in loco degli effluenti, contenenti sostanze pericolose</div></div><div class="clip" style="left:495px;top:445px;width:59px;height:22px"><div class="t" style="left:4.5px;top:3.84px;font-size:12px;color:#000;font-weight:400;">100122</div></div><div class="clip" style="left:555px;top:445px;width:249px;height:22px"><div class="t" style="left:4px;top:3.84px;font-size:12px;color:#000;font-weight:400;">Rifiuti provenienti da processi termici</div></div><div class="clip" style="left:805px;top:445px;width:249px;height:22px"><div class="t" style="left:4.5px;top:3.84px;font-size:12px;color:#000;font-weight:400;">Rifiuti prodotti da centrali termiche ed altri i...</div></div><div class="clip" style="left:1055px;top:445px;width:463px;height:22px"><div class="t" style="left:4.5px;top:3.84px;font-size:12px;color:#000;font-weight:400;">fanghi acquosi da operazioni di pulizia caldaie, contenenti sostanze pericolose</div></div><div class="clip" style="left:495px;top:467px;width:59px;height:22px"><div class="t" style="left:4.5px;top:3.84px;font-size:12px;color:#000;font-weight:400;">100207</div></div><div class="clip" style="left:555px;top:467px;width:249px;height:22px"><div class="t" style="left:4px;top:3.84px;font-size:12px;color:#000;font-weight:400;">Rifiuti provenienti da processi termici</div></div><div class="clip" style="left:805px;top:467px;width:249px;height:22px"><div class="t" style="left:4.5px;top:3.84px;font-size:12px;color:#000;font-weight:400;">Rifiuti dell&#x27;industria siderurgica</div></div><div class="clip" style="left:1055px;top:467px;width:463px;height:22px"><div class="t" style="left:4.5px;top:3.84px;font-size:12px;color:#000;font-weight:400;">rifiuti solidi prodotti dal trattamento dei fumi, contenenti sostanze pericolose</div></div><div class="clip" style="left:495px;top:489px;width:59px;height:22px"><div class="t" style="left:4.5px;top:3.84px;font-size:12px;color:#000;font-weight:400;">100211</div></div><div class="clip" style="left:555px;top:489px;width:249px;height:22px"><div class="t" style="left:4px;top:3.84px;font-size:12px;color:#000;font-weight:400;">Rifiuti provenienti da processi termici</div></div><div class="clip" style="left:805px;top:489px;width:249px;height:22px"><div class="t" style="left:4.5px;top:3.84px;font-size:12px;color:#000;font-weight:400;">Rifiuti dell&#x27;industria siderurgica</div></div><div class="clip" style="left:1055px;top:489px;width:463px;height:22px"><div class="t" style="left:4.5px;top:3.84px;font-size:12px;color:#000;font-weight:400;">rifiuti prodotti dal trattamento delle acque di raffreddamento, contenenti oli</div></div><div class="a" style="left:495px;top:313px;width:1024px;height:1px;background:#f0f0f0"></div><div class="a" style="left:495px;top:335px;width:1024px;height:1px;background:#f0f0f0"></div><div class="a" style="left:495px;top:357px;width:1024px;height:1px;background:#f0f0f0"></div><div class="a" style="left:495px;top:379px;width:1024px;height:1px;background:#f0f0f0"></div><div class="a" style="left:495px;top:401px;width:1024px;height:1px;background:#f0f0f0"></div><div class="a" style="left:495px;top:423px;width:1024px;height:1px;background:#f0f0f0"></div><div class="a" style="left:495px;top:445px;width:1024px;height:1px;background:#f0f0f0"></div><div class="a" style="left:495px;top:467px;width:1024px;height:1px;background:#f0f0f0"></div><div class="a" style="left:495px;top:489px;width:1024px;height:1px;background:#f0f0f0"></div><div class="a" style="left:495px;top:511px;width:1024px;height:1px;background:#f0f0f0"></div><div class="a" style="left:555px;top:291px;width:1px;height:225px;background:#f0f0f0"></div><div class="a" style="left:805px;top:291px;width:1px;height:225px;background:#f0f0f0"></div><div class="a" style="left:1055px;top:291px;width:1px;height:225px;background:#f0f0f0"></div><div class="a" style="left:495px;top:291px;width:1px;height:225px;background:#f0f0f0"></div><svg class="a" style="left:543px;top:278px" width="10" height="6" viewBox="0 0 10 6"><path d="M0 6L5 0 10 6z" fill="#a8a8a8"/></svg><div class="a" style="left:1520px;top:269px;width:16px;height:247px;background:#f0f0f0"></div><div class="a" style="left:1520px;top:286px;width:16px;height:17px;background:#cdcdcd"></div><svg class="a" style="left:1523px;top:274px" width="10" height="7" viewBox="0 0 10 7"><path d="M1 6L5 2 9 6" fill="none" stroke="#555" stroke-width="1.8"/></svg><svg class="a" style="left:1523px;top:504px" width="10" height="7" viewBox="0 0 10 7"><path d="M1 1L5 5 9 1" fill="none" stroke="#555" stroke-width="1.8"/></svg><div class="a" style="left:495px;top:516px;width:1041px;height:15px;background:#f0f0f0"></div><div class="a" style="left:512px;top:516px;width:955px;height:15px;background:#cdcdcd"></div><svg class="a" style="left:499px;top:519px" width="8" height="9" viewBox="0 0 8 9"><path d="M6 1L2 4.5 6 8" fill="none" stroke="#555" stroke-width="1.8"/></svg><svg class="a" style="left:1507px;top:519px" width="8" height="9" viewBox="0 0 8 9"><path d="M2 1L6 4.5 2 8" fill="none" stroke="#555" stroke-width="1.8"/></svg><div class="t" style="left:493.5px;top:535.84px;font-size:12px;color:#000;font-weight:400;">(2) - Seleziona stato fisico rifiuto:</div><div class="a" style="left:495px;top:557px;width:516px;height:23px;background:#e1e1e1;border:1px solid #adadad"></div><div class="clip" style="left:496px;top:558px;width:494px;height:21px"><div class="t" style="left:3.5px;top:2.84px;font-size:12px;color:#000;font-weight:400;">Solido</div></div><svg class="a" style="left:997px;top:565px" width="10" height="6" viewBox="0 0 10 6"><path d="M1 1L5 5 9 1" fill="none" stroke="#333" stroke-width="1.1"/></svg><div class="t" style="left:493.5px;top:583.84px;font-size:12px;color:#000;font-weight:400;">(3) - Scegli caratteristica di pericolo principale HP:</div><div class="a" style="left:495px;top:605px;width:516px;height:23px;background:#e1e1e1;border:1px solid #adadad"></div><div class="clip" style="left:496px;top:606px;width:494px;height:21px"><div class="t" style="left:3.5px;top:2.84px;font-size:12px;color:#000;font-weight:400;">HP6 - «Tossicità acuta»: rifiuto che può provocare effetti tossici acuti in seguito alla somministrazione</div></div><svg class="a" style="left:997px;top:613px" width="10" height="6" viewBox="0 0 10 6"><path d="M1 1L5 5 9 1" fill="none" stroke="#333" stroke-width="1.1"/></svg><div class="t" style="left:1017px;top:535.84px;font-size:12px;color:#000;font-weight:400;">Opzionale - seleziona altre caratteristiche di pericolo HP:</div><div class="a" style="left:1019px;top:557px;width:517px;height:90px;background:#fff;border:1px solid #828790"></div><div class="clip" style="left:1020px;top:558px;width:498px;height:88px"><div class="a" style="left:2px;top:3px;width:13px;height:13px;background:#fff;border:1px solid #333"></div><div class="t" style="left:19.5px;top:1.84px;font-size:12px;color:#000;font-weight:400;">HP1 - «Esplosivo»: rifiuto che può, per reazione chimica, sviluppare gas a una temperatura</div><div class="a" style="left:2px;top:21px;width:13px;height:13px;background:#fff;border:1px solid #333"></div><div class="t" style="left:19.5px;top:19.84px;font-size:12px;color:#000;font-weight:400;">HP2 - «Comburente»: rifiuto capace, in genere per apporto di ossigeno, di provocare o favorire</div><div class="a" style="left:2px;top:39px;width:13px;height:13px;background:#fff;border:1px solid #333"></div><div class="t" style="left:19.5px;top:37.84px;font-size:12px;color:#000;font-weight:400;">HP3 - «Infiammabile»:</div><div class="a" style="left:2px;top:57px;width:13px;height:13px;background:#fff;border:1px solid #333"></div><div class="t" style="left:19.5px;top:55.84px;font-size:12px;color:#000;font-weight:400;">HP4 - «Irritante - irritazione cutanea e lesioni oculari»: rifiuto la cui applicazione può provocare</div><div class="a" style="left:2px;top:75px;width:13px;height:13px;background:#fff;border:1px solid #333"></div><div class="t" style="left:19.5px;top:73.84px;font-size:12px;color:#000;font-weight:400;">HP5 - «Tossicità specifica per organi bersaglio (STOT) / Tossicità in caso di aspirazione»: rifiuto</div></div><div class="a" style="left:1518px;top:558px;width:17px;height:88px;background:#f0f0f0"></div><div class="a" style="left:1518px;top:576px;width:16px;height:17px;background:#cdcdcd"></div><svg class="a" style="left:1521px;top:564px" width="10" height="7" viewBox="0 0 10 7"><path d="M1 6L5 2 9 6" fill="none" stroke="#555" stroke-width="1.8"/></svg><svg class="a" style="left:1521px;top:634px" width="10" height="7" viewBox="0 0 10 7"><path d="M1 1L5 5 9 1" fill="none" stroke="#555" stroke-width="1.8"/></svg><div class="t" style="left:493.5px;top:650.84px;font-size:12px;color:#000;font-weight:400;">(4) - Seleziona materia ONU :</div><div class="t" style="left:502px;top:680.84px;font-size:12px;color:#000;font-weight:400;">ONU:</div><div class="a" style="left:541px;top:675px;width:81px;height:23px;background:#fff;border:1px solid #7a7a7a"></div><div class="t" style="left:636px;top:680.84px;font-size:12px;color:#000;font-weight:400;">Denominazione:</div><div class="a" style="left:731px;top:675px;width:713px;height:23px;background:#fff;border:1px solid #7a7a7a"></div><div class="t" style="left:734px;top:677.84px;font-size:12px;color:#000;font-weight:400;">toss</div><div class="a" style="left:1449px;top:673px;width:86px;height:29px;background:#e1e1e1;border:1px solid #adadad"></div><svg class="a" style="left:1460px;top:678px" width="17" height="18" viewBox="0 0 17 18"><path d="M0.3 2H15.4L10 8.5V16.7H6V8.5z" fill="#707070"/><path d="M12.8 3.2L9 8.2V15.8" fill="none" stroke="#fff" stroke-width="1.1"/></svg><div class="t" style="left:1490px;top:678.84px;font-size:12px;color:#000;font-weight:400;">Filtra</div><div class="a" style="left:495px;top:704px;width:119px;height:28px;background:#fff;border:1px solid #d9d9d9;border-bottom:none"></div><div class="t" style="left:501.5px;top:710.34px;font-size:12px;color:#000;font-weight:400;letter-spacing:-0.25px">Risultati ricerca (374)</div><div class="a" style="left:614px;top:705px;width:93px;height:26px;background:#f0f0f0;border-top:1px solid #d6d6d6"></div><div class="t" style="left:621.5px;top:710.84px;font-size:12px;color:#000;font-weight:400;">Tutte le materie</div><div class="a" style="left:613px;top:731px;width:923px;height:1px;background:#808a8c"></div><div class="a" style="left:496px;top:731px;width:117px;height:1px;background:#e6e6e6"></div><div class="a" style="left:495px;top:732px;width:1025px;height:249px;background:#fff"></div><div class="a" style="left:520px;top:733px;width:1px;height:21px;background:#e5e5e5"></div><div class="a" style="left:580px;top:733px;width:1px;height:21px;background:#e5e5e5"></div><div class="a" style="left:1080px;top:733px;width:1px;height:21px;background:#e5e5e5"></div><div class="a" style="left:1140px;top:733px;width:1px;height:21px;background:#e5e5e5"></div><div class="a" style="left:1240px;top:733px;width:1px;height:21px;background:#e5e5e5"></div><div class="a" style="left:1290px;top:733px;width:1px;height:21px;background:#e5e5e5"></div><div class="a" style="left:1330px;top:733px;width:1px;height:21px;background:#e5e5e5"></div><div class="a" style="left:1370px;top:733px;width:1px;height:21px;background:#e5e5e5"></div><div class="a" style="left:1410px;top:733px;width:1px;height:21px;background:#e5e5e5"></div><div class="a" style="left:1450px;top:733px;width:1px;height:21px;background:#e5e5e5"></div><div class="clip" style="left:520px;top:732px;width:59px;height:22px"><div class="t" style="left:8.5px;top:2.84px;font-size:12px;color:#000;font-weight:400;">ONU [1]</div></div><div class="clip" style="left:580px;top:732px;width:499px;height:22px"><div class="t" style="left:8px;top:2.84px;font-size:12px;color:#000;font-weight:400;">Denominazione e descrizione [2]</div></div><div class="clip" style="left:1080px;top:732px;width:59px;height:22px"><div class="t" style="left:8px;top:2.84px;font-size:12px;color:#000;font-weight:400;">Classe ...</div></div><div class="clip" style="left:1140px;top:732px;width:99px;height:22px"><div class="t" style="left:8px;top:2.84px;font-size:12px;color:#000;font-weight:400;">Codice classifi...</div></div><div class="clip" style="left:1240px;top:732px;width:49px;height:22px"><div class="t" style="left:8px;top:2.84px;font-size:12px;color:#000;font-weight:400;">Grup...</div></div><div class="clip" style="left:1290px;top:732px;width:39px;height:22px"><div class="t" style="left:8px;top:2.84px;font-size:12px;color:#000;font-weight:400;">Eti...</div></div><div class="clip" style="left:1330px;top:732px;width:39px;height:22px"><div class="t" style="left:8px;top:2.84px;font-size:12px;color:#000;font-weight:400;">Eti...</div></div><div class="clip" style="left:1370px;top:732px;width:39px;height:22px"><div class="t" style="left:8px;top:2.84px;font-size:12px;color:#000;font-weight:400;">Eti...</div></div><div class="clip" style="left:1410px;top:732px;width:39px;height:22px"><div class="t" style="left:8px;top:2.84px;font-size:12px;color:#000;font-weight:400;">Eti...</div></div><div class="clip" style="left:1450px;top:732px;width:68px;height:22px"><div class="t" style="left:8px;top:2.84px;font-size:12px;color:#000;font-weight:400;">Codice disp</div></div><div class="a" style="left:495px;top:886px;width:1024px;height:22px;background:#fde0c4"></div><div class="clip" style="left:520px;top:754px;width:59px;height:22px"><div class="t" style="left:4.5px;top:3.84px;font-size:12px;color:#000;font-weight:400;">1986</div></div><div class="clip" style="left:580px;top:754px;width:499px;height:22px"><div class="t" style="left:4px;top:3.84px;font-size:12px;color:#000;font-weight:400;"><span style="letter-spacing:-0.46px">ALCOLI INFIAMMABILI, TOSSICI, N.A.S.</span></div></div><div class="clip" style="left:1080px;top:754px;width:59px;height:22px"><div class="t" style="left:3.5px;top:3.84px;font-size:12px;color:#000;font-weight:400;">3</div></div><div class="clip" style="left:1140px;top:754px;width:99px;height:22px"><div class="t" style="left:4px;top:3.84px;font-size:12px;color:#000;font-weight:400;">FT1</div></div><div class="clip" style="left:1240px;top:754px;width:49px;height:22px"><div class="t" style="left:3.5px;top:3.84px;font-size:12px;color:#000;font-weight:400;">III</div></div><div class="clip" style="left:1290px;top:754px;width:39px;height:22px"><div class="t" style="left:3.5px;top:3.84px;font-size:12px;color:#000;font-weight:400;">3</div></div><div class="clip" style="left:1330px;top:754px;width:39px;height:22px"><div class="t" style="left:3.5px;top:3.84px;font-size:12px;color:#000;font-weight:400;">6.1</div></div><div class="clip" style="left:1450px;top:754px;width:68px;height:22px"><div class="t" style="left:3.5px;top:3.84px;font-size:12px;color:#000;font-weight:400;">274</div></div><div class="clip" style="left:520px;top:776px;width:59px;height:22px"><div class="t" style="left:4.5px;top:3.84px;font-size:12px;color:#000;font-weight:400;">1986</div></div><div class="clip" style="left:580px;top:776px;width:499px;height:22px"><div class="t" style="left:4px;top:3.84px;font-size:12px;color:#000;font-weight:400;"><span style="letter-spacing:-0.46px">ALCOLI INFIAMMABILI, TOSSICI, N.A.S.</span></div></div><div class="clip" style="left:1080px;top:776px;width:59px;height:22px"><div class="t" style="left:3.5px;top:3.84px;font-size:12px;color:#000;font-weight:400;">3</div></div><div class="clip" style="left:1140px;top:776px;width:99px;height:22px"><div class="t" style="left:4px;top:3.84px;font-size:12px;color:#000;font-weight:400;">FT1</div></div><div class="clip" style="left:1240px;top:776px;width:49px;height:22px"><div class="t" style="left:3.5px;top:3.84px;font-size:12px;color:#000;font-weight:400;">I</div></div><div class="clip" style="left:1290px;top:776px;width:39px;height:22px"><div class="t" style="left:3.5px;top:3.84px;font-size:12px;color:#000;font-weight:400;">3</div></div><div class="clip" style="left:1330px;top:776px;width:39px;height:22px"><div class="t" style="left:3.5px;top:3.84px;font-size:12px;color:#000;font-weight:400;">6.1</div></div><div class="clip" style="left:1450px;top:776px;width:68px;height:22px"><div class="t" style="left:3.5px;top:3.84px;font-size:12px;color:#000;font-weight:400;">274</div></div><div class="clip" style="left:520px;top:798px;width:59px;height:22px"><div class="t" style="left:4.5px;top:3.84px;font-size:12px;color:#000;font-weight:400;">1986</div></div><div class="clip" style="left:580px;top:798px;width:499px;height:22px"><div class="t" style="left:4px;top:3.84px;font-size:12px;color:#000;font-weight:400;"><span style="letter-spacing:-0.46px">ALCOLI INFIAMMABILI, TOSSICI, N.A.S.</span></div></div><div class="clip" style="left:1080px;top:798px;width:59px;height:22px"><div class="t" style="left:3.5px;top:3.84px;font-size:12px;color:#000;font-weight:400;">3</div></div><div class="clip" style="left:1140px;top:798px;width:99px;height:22px"><div class="t" style="left:4px;top:3.84px;font-size:12px;color:#000;font-weight:400;">FT1</div></div><div class="clip" style="left:1240px;top:798px;width:49px;height:22px"><div class="t" style="left:3.5px;top:3.84px;font-size:12px;color:#000;font-weight:400;">II</div></div><div class="clip" style="left:1290px;top:798px;width:39px;height:22px"><div class="t" style="left:3.5px;top:3.84px;font-size:12px;color:#000;font-weight:400;">3</div></div><div class="clip" style="left:1330px;top:798px;width:39px;height:22px"><div class="t" style="left:3.5px;top:3.84px;font-size:12px;color:#000;font-weight:400;">6.1</div></div><div class="clip" style="left:1450px;top:798px;width:68px;height:22px"><div class="t" style="left:3.5px;top:3.84px;font-size:12px;color:#000;font-weight:400;">274</div></div><div class="clip" style="left:520px;top:820px;width:59px;height:22px"><div class="t" style="left:4.5px;top:3.84px;font-size:12px;color:#000;font-weight:400;">1988</div></div><div class="clip" style="left:580px;top:820px;width:499px;height:22px"><div class="t" style="left:4px;top:3.84px;font-size:12px;color:#000;font-weight:400;"><span style="letter-spacing:-0.52px">ALDEIDI INFIAMMABILI, TOSSICHE, N.A.S.</span></div></div><div class="clip" style="left:1080px;top:820px;width:59px;height:22px"><div class="t" style="left:3.5px;top:3.84px;font-size:12px;color:#000;font-weight:400;">3</div></div><div class="clip" style="left:1140px;top:820px;width:99px;height:22px"><div class="t" style="left:4px;top:3.84px;font-size:12px;color:#000;font-weight:400;">FT1</div></div><div class="clip" style="left:1240px;top:820px;width:49px;height:22px"><div class="t" style="left:3.5px;top:3.84px;font-size:12px;color:#000;font-weight:400;">III</div></div><div class="clip" style="left:1290px;top:820px;width:39px;height:22px"><div class="t" style="left:3.5px;top:3.84px;font-size:12px;color:#000;font-weight:400;">3</div></div><div class="clip" style="left:1330px;top:820px;width:39px;height:22px"><div class="t" style="left:3.5px;top:3.84px;font-size:12px;color:#000;font-weight:400;">6.1</div></div><div class="clip" style="left:1450px;top:820px;width:68px;height:22px"><div class="t" style="left:3.5px;top:3.84px;font-size:12px;color:#000;font-weight:400;">274</div></div><div class="clip" style="left:520px;top:842px;width:59px;height:22px"><div class="t" style="left:4.5px;top:3.84px;font-size:12px;color:#000;font-weight:400;">1988</div></div><div class="clip" style="left:580px;top:842px;width:499px;height:22px"><div class="t" style="left:4px;top:3.84px;font-size:12px;color:#000;font-weight:400;"><span style="letter-spacing:-0.52px">ALDEIDI INFIAMMABILI, TOSSICHE, N.A.S.</span></div></div><div class="clip" style="left:1080px;top:842px;width:59px;height:22px"><div class="t" style="left:3.5px;top:3.84px;font-size:12px;color:#000;font-weight:400;">3</div></div><div class="clip" style="left:1140px;top:842px;width:99px;height:22px"><div class="t" style="left:4px;top:3.84px;font-size:12px;color:#000;font-weight:400;">FT1</div></div><div class="clip" style="left:1240px;top:842px;width:49px;height:22px"><div class="t" style="left:3.5px;top:3.84px;font-size:12px;color:#000;font-weight:400;">I</div></div><div class="clip" style="left:1290px;top:842px;width:39px;height:22px"><div class="t" style="left:3.5px;top:3.84px;font-size:12px;color:#000;font-weight:400;">3</div></div><div class="clip" style="left:1330px;top:842px;width:39px;height:22px"><div class="t" style="left:3.5px;top:3.84px;font-size:12px;color:#000;font-weight:400;">6.1</div></div><div class="clip" style="left:1450px;top:842px;width:68px;height:22px"><div class="t" style="left:3.5px;top:3.84px;font-size:12px;color:#000;font-weight:400;">274</div></div><div class="clip" style="left:520px;top:864px;width:59px;height:22px"><div class="t" style="left:4.5px;top:3.84px;font-size:12px;color:#000;font-weight:400;">1988</div></div><div class="clip" style="left:580px;top:864px;width:499px;height:22px"><div class="t" style="left:4px;top:3.84px;font-size:12px;color:#000;font-weight:400;"><span style="letter-spacing:-0.52px">ALDEIDI INFIAMMABILI, TOSSICHE, N.A.S.</span></div></div><div class="clip" style="left:1080px;top:864px;width:59px;height:22px"><div class="t" style="left:3.5px;top:3.84px;font-size:12px;color:#000;font-weight:400;">3</div></div><div class="clip" style="left:1140px;top:864px;width:99px;height:22px"><div class="t" style="left:4px;top:3.84px;font-size:12px;color:#000;font-weight:400;">FT1</div></div><div class="clip" style="left:1240px;top:864px;width:49px;height:22px"><div class="t" style="left:3.5px;top:3.84px;font-size:12px;color:#000;font-weight:400;">II</div></div><div class="clip" style="left:1290px;top:864px;width:39px;height:22px"><div class="t" style="left:3.5px;top:3.84px;font-size:12px;color:#000;font-weight:400;">3</div></div><div class="clip" style="left:1330px;top:864px;width:39px;height:22px"><div class="t" style="left:3.5px;top:3.84px;font-size:12px;color:#000;font-weight:400;">6.1</div></div><div class="clip" style="left:1450px;top:864px;width:68px;height:22px"><div class="t" style="left:3.5px;top:3.84px;font-size:12px;color:#000;font-weight:400;">274</div></div><div class="clip" style="left:520px;top:886px;width:59px;height:22px"><div class="t" style="left:4.5px;top:3.84px;font-size:12px;color:#000;font-weight:400;">1992</div></div><div class="clip" style="left:580px;top:886px;width:499px;height:22px"><div class="t" style="left:4px;top:3.84px;font-size:12px;color:#000;font-weight:400;"><span style="letter-spacing:-0.5px">LIQUIDO INFIAMMABILE, TOSSICO, N.A.S.</span></div></div><div class="clip" style="left:1080px;top:886px;width:59px;height:22px"><div class="t" style="left:3.5px;top:3.84px;font-size:12px;color:#000;font-weight:400;">3</div></div><div class="clip" style="left:1140px;top:886px;width:99px;height:22px"><div class="t" style="left:4px;top:3.84px;font-size:12px;color:#000;font-weight:400;">FT1</div></div><div class="clip" style="left:1240px;top:886px;width:49px;height:22px"><div class="t" style="left:3.5px;top:3.84px;font-size:12px;color:#000;font-weight:400;">III</div></div><div class="clip" style="left:1290px;top:886px;width:39px;height:22px"><div class="t" style="left:3.5px;top:3.84px;font-size:12px;color:#000;font-weight:400;">3</div></div><div class="clip" style="left:1330px;top:886px;width:39px;height:22px"><div class="t" style="left:3.5px;top:3.84px;font-size:12px;color:#000;font-weight:400;">6.1</div></div><div class="clip" style="left:1450px;top:886px;width:68px;height:22px"><div class="t" style="left:3.5px;top:3.84px;font-size:12px;color:#000;font-weight:400;">274</div></div><div class="clip" style="left:520px;top:908px;width:59px;height:22px"><div class="t" style="left:4.5px;top:3.84px;font-size:12px;color:#000;font-weight:400;">1992</div></div><div class="clip" style="left:580px;top:908px;width:499px;height:22px"><div class="t" style="left:4px;top:3.84px;font-size:12px;color:#000;font-weight:400;"><span style="letter-spacing:-0.5px">LIQUIDO INFIAMMABILE, TOSSICO, N.A.S.</span></div></div><div class="clip" style="left:1080px;top:908px;width:59px;height:22px"><div class="t" style="left:3.5px;top:3.84px;font-size:12px;color:#000;font-weight:400;">3</div></div><div class="clip" style="left:1140px;top:908px;width:99px;height:22px"><div class="t" style="left:4px;top:3.84px;font-size:12px;color:#000;font-weight:400;">FT1</div></div><div class="clip" style="left:1240px;top:908px;width:49px;height:22px"><div class="t" style="left:3.5px;top:3.84px;font-size:12px;color:#000;font-weight:400;">I</div></div><div class="clip" style="left:1290px;top:908px;width:39px;height:22px"><div class="t" style="left:3.5px;top:3.84px;font-size:12px;color:#000;font-weight:400;">3</div></div><div class="clip" style="left:1330px;top:908px;width:39px;height:22px"><div class="t" style="left:3.5px;top:3.84px;font-size:12px;color:#000;font-weight:400;">6.1</div></div><div class="clip" style="left:1450px;top:908px;width:68px;height:22px"><div class="t" style="left:3.5px;top:3.84px;font-size:12px;color:#000;font-weight:400;">274</div></div><div class="clip" style="left:520px;top:930px;width:59px;height:22px"><div class="t" style="left:4.5px;top:3.84px;font-size:12px;color:#000;font-weight:400;">1992</div></div><div class="clip" style="left:580px;top:930px;width:499px;height:22px"><div class="t" style="left:4px;top:3.84px;font-size:12px;color:#000;font-weight:400;"><span style="letter-spacing:-0.5px">LIQUIDO INFIAMMABILE, TOSSICO, N.A.S.</span></div></div><div class="clip" style="left:1080px;top:930px;width:59px;height:22px"><div class="t" style="left:3.5px;top:3.84px;font-size:12px;color:#000;font-weight:400;">3</div></div><div class="clip" style="left:1140px;top:930px;width:99px;height:22px"><div class="t" style="left:4px;top:3.84px;font-size:12px;color:#000;font-weight:400;">FT1</div></div><div class="clip" style="left:1240px;top:930px;width:49px;height:22px"><div class="t" style="left:3.5px;top:3.84px;font-size:12px;color:#000;font-weight:400;">II</div></div><div class="clip" style="left:1290px;top:930px;width:39px;height:22px"><div class="t" style="left:3.5px;top:3.84px;font-size:12px;color:#000;font-weight:400;">3</div></div><div class="clip" style="left:1330px;top:930px;width:39px;height:22px"><div class="t" style="left:3.5px;top:3.84px;font-size:12px;color:#000;font-weight:400;">6.1</div></div><div class="clip" style="left:1450px;top:930px;width:68px;height:22px"><div class="t" style="left:3.5px;top:3.84px;font-size:12px;color:#000;font-weight:400;">274</div></div><div class="clip" style="left:520px;top:952px;width:59px;height:22px"><div class="t" style="left:4.5px;top:3.84px;font-size:12px;color:#000;font-weight:400;">2016</div></div><div class="clip" style="left:580px;top:952px;width:499px;height:22px"><div class="t" style="left:4px;top:3.84px;font-size:12px;color:#000;font-weight:400;"><span style="letter-spacing:-0.72px">MUNIZIONI TOSSICHE NON ESPLOSIVE, SENZA CARICA DI DISPERSIONE E DI ESPULSIONE, ...</span></div></div><div class="clip" style="left:1080px;top:952px;width:59px;height:22px"><div class="t" style="left:3.5px;top:3.84px;font-size:12px;color:#000;font-weight:400;">6.1</div></div><div class="clip" style="left:1140px;top:952px;width:99px;height:22px"><div class="t" style="left:4px;top:3.84px;font-size:12px;color:#000;font-weight:400;">T2</div></div><div class="clip" style="left:1290px;top:952px;width:39px;height:22px"><div class="t" style="left:3.5px;top:3.84px;font-size:12px;color:#000;font-weight:400;">6.1</div></div><div class="a" style="left:495px;top:776px;width:1024px;height:1px;background:#f0f0f0"></div><div class="a" style="left:495px;top:798px;width:1024px;height:1px;background:#f0f0f0"></div><div class="a" style="left:495px;top:820px;width:1024px;height:1px;background:#f0f0f0"></div><div class="a" style="left:495px;top:842px;width:1024px;height:1px;background:#f0f0f0"></div><div class="a" style="left:495px;top:864px;width:1024px;height:1px;background:#f0f0f0"></div><div class="a" style="left:495px;top:886px;width:1024px;height:1px;background:#f0f0f0"></div><div class="a" style="left:495px;top:908px;width:1024px;height:1px;background:#f0f0f0"></div><div class="a" style="left:495px;top:930px;width:1024px;height:1px;background:#f0f0f0"></div><div class="a" style="left:495px;top:952px;width:1024px;height:1px;background:#f0f0f0"></div><div class="a" style="left:495px;top:974px;width:1024px;height:1px;background:#f0f0f0"></div><div class="a" style="left:520px;top:754px;width:1px;height:227px;background:#f0f0f0"></div><div class="a" style="left:580px;top:754px;width:1px;height:227px;background:#f0f0f0"></div><div class="a" style="left:1080px;top:754px;width:1px;height:227px;background:#f0f0f0"></div><div class="a" style="left:1140px;top:754px;width:1px;height:227px;background:#f0f0f0"></div><div class="a" style="left:1240px;top:754px;width:1px;height:227px;background:#f0f0f0"></div><div class="a" style="left:1290px;top:754px;width:1px;height:227px;background:#f0f0f0"></div><div class="a" style="left:1330px;top:754px;width:1px;height:227px;background:#f0f0f0"></div><div class="a" style="left:1370px;top:754px;width:1px;height:227px;background:#f0f0f0"></div><div class="a" style="left:1410px;top:754px;width:1px;height:227px;background:#f0f0f0"></div><div class="a" style="left:1450px;top:754px;width:1px;height:227px;background:#f0f0f0"></div><div class="a" style="left:495px;top:754px;width:1px;height:227px;background:#f0f0f0"></div><div class="a" style="left:1520px;top:732px;width:16px;height:249px;background:#f0f0f0"></div><div class="a" style="left:1520px;top:764px;width:16px;height:17px;background:#cdcdcd"></div><svg class="a" style="left:1523px;top:737px" width="10" height="7" viewBox="0 0 10 7"><path d="M1 6L5 2 9 6" fill="none" stroke="#555" stroke-width="1.8"/></svg><svg class="a" style="left:1523px;top:969px" width="10" height="7" viewBox="0 0 10 7"><path d="M1 1L5 5 9 1" fill="none" stroke="#555" stroke-width="1.8"/></svg><div class="a" style="left:495px;top:982px;width:1041px;height:15px;background:#f0f0f0"></div><div class="a" style="left:512px;top:982px;width:305px;height:15px;background:#cdcdcd"></div><svg class="a" style="left:499px;top:985px" width="8" height="9" viewBox="0 0 8 9"><path d="M6 1L2 4.5 6 8" fill="none" stroke="#555" stroke-width="1.8"/></svg><svg class="a" style="left:1507px;top:985px" width="8" height="9" viewBox="0 0 8 9"><path d="M2 1L6 4.5 2 8" fill="none" stroke="#555" stroke-width="1.8"/></svg><div class="a" style="left:1554px;top:134px;width:357px;height:111px;background:#f0f0f0;border:1px solid #b9b9b9;border-radius:4px;overflow:hidden"></div><div class="a" style="left:1555px;top:135px;width:355px;height:34px;background:linear-gradient(#bdfa74,#e6fcd0);border-radius:3px 3px 0 0"></div><div class="a" style="left:1555px;top:169px;width:355px;height:1px;background:#b9b9b9"></div><svg class="a" style="left:1559px;top:138px" width="16" height="18" viewBox="0 0 16 18"><rect x="1" y="1.5" width="14" height="2" fill="#3f6fb5"/><rect x="6" y="0.5" width="4" height="1.5" fill="#3f6fb5"/><rect x="2" y="5" width="12" height="12" fill="#555"/><path d="M5 6.5v9M8 6.5v9M11 6.5v9" stroke="#fff" stroke-width="1.5"/></svg><div class="t" style="left:1581.5px;top:138.84px;font-size:12px;color:#000;font-weight:700;">Dati rifiuto</div><div class="t" style="left:1559px;top:174.19px;font-size:11px;color:#000;font-weight:400;"><b>CER: </b>100207</div><div class="t" style="left:1559px;top:187.19px;font-size:11px;color:#000;font-weight:400;letter-spacing:0.42px"><b>Denominazione: </b>rifiuti solidi prodotti dal trattamento dei fumi,</div><div class="t" style="left:1559px;top:200.19px;font-size:11px;color:#000;font-weight:400;letter-spacing:0.3px"><b></b>contenenti sostanze pericolose</div><div class="t" style="left:1559px;top:212.19px;font-size:11px;color:#000;font-weight:400;"><b>Stato fisico: </b>Solido</div><div class="t" style="left:1559px;top:226.19px;font-size:11px;color:#000;font-weight:400;"><b>C.P. Principale: </b><span style="color:#1f5fbf;text-decoration:underline">HP6</span></div><div class="a" style="left:1554px;top:249px;width:357px;height:175px;background:#f0f0f0;border:1px solid #b9b9b9;border-radius:4px;overflow:hidden"></div><div class="a" style="left:1555px;top:250px;width:355px;height:33px;background:linear-gradient(#fcb04c,#fde3c0);border-radius:3px 3px 0 0"></div><div class="a" style="left:1555px;top:283px;width:355px;height:1px;background:#b9b9b9"></div><svg class="a" style="left:1559px;top:254px" width="17" height="17" viewBox="0 0 17 17"><circle cx="8.3" cy="8.3" r="8" fill="#e6b668"/><path d="M8.3 8.3L0.30 8.30A8 8 0 0 1 4.30 1.37z" fill="#474747"/><path d="M8.3 8.3L12.30 1.37A8 8 0 0 1 16.30 8.30z" fill="#474747"/><path d="M8.3 8.3L12.30 15.23A8 8 0 0 1 4.30 15.23z" fill="#474747"/><circle cx="8.3" cy="8.3" r="1.2" fill="#e6b668"/></svg><div class="t" style="left:1581.5px;top:253.84px;font-size:12px;color:#000;font-weight:700;">Dati materia</div><div class="t" style="left:1559px;top:288.19px;font-size:11px;color:#000;font-weight:400;"><b>ONU [1]: </b>1992</div><div class="t" style="left:1559px;top:301.19px;font-size:11px;color:#000;font-weight:400;"><b>Classe [3a]: </b><span style="color:#1f5fbf;text-decoration:underline">3</span></div><div class="t" style="left:1559px;top:314.19px;font-size:11px;color:#000;font-weight:400;"><b>Denominazione [2]: </b><span style="letter-spacing:-0.27px">LIQUIDO INFIAMMABILE, TOSSICO, N.A.S.</span></div><div class="t" style="left:1559px;top:327.19px;font-size:11px;color:#000;font-weight:400;"><b>Codice classificazione [3b]: </b>FT1</div><div class="t" style="left:1559px;top:340.19px;font-size:11px;color:#000;font-weight:400;"><b>G.I. [4]: </b>III</div><div class="t" style="left:1559px;top:353.19px;font-size:11px;color:#000;font-weight:400;"><b>Disposizioni speciali [6]: </b>274</div><div class="t" style="left:1559px;top:366.19px;font-size:11px;color:#000;font-weight:400;"><b>Quantità limitate [7a]: </b>5 L</div><div class="t" style="left:1559px;top:379.19px;font-size:11px;color:#000;font-weight:400;"><b>Quantità esenti [7b]: </b>E1</div><div class="t" style="left:1559px;top:392.19px;font-size:11px;color:#000;font-weight:400;"><b>Codice restrizione galleria [15a]: </b>D/E</div><div class="t" style="left:1559px;top:405.19px;font-size:11px;color:#000;font-weight:400;"><b>Kemler [20]: </b><span style="color:#1f5fbf;text-decoration:underline">36</span></div><div class="a" style="left:1554px;top:429px;width:357px;height:152px;background:#f0f0f0;border:1px solid #b9b9b9;border-radius:4px;overflow:hidden"></div><div class="a" style="left:1555px;top:430px;width:355px;height:33px;background:linear-gradient(#ff8282,#ffd4d4);border-radius:3px 3px 0 0"></div><div class="a" style="left:1555px;top:463px;width:355px;height:1px;background:#b9b9b9"></div><svg class="a" style="left:1559px;top:432px" width="16" height="17" viewBox="0 0 16 17"><path d="M8 1L15.5 16H0.5z" fill="#e9b563"/><rect x="7" y="6" width="2" height="5.5" fill="#000"/><rect x="7" y="13" width="2" height="2" fill="#000"/></svg><div class="t" style="left:1581.5px;top:433.84px;font-size:12px;color:#000;font-weight:700;">Attenzione!</div><div class="t" style="left:1559px;top:468.19px;font-size:11px;color:#000;font-weight:700;letter-spacing:-0.05px">La classificazione del rifiuto con la modalità avanzata se effettuata</div><div class="t" style="left:1559px;top:480.19px;font-size:11px;color:#000;font-weight:700;letter-spacing:-0.05px">in modo errato e/o senza le necessarie competenze può portare</div><div class="t" style="left:1559px;top:494.19px;font-size:11px;color:#000;font-weight:700;letter-spacing:-0.05px">alla compilazione di una scheda di Istruzioni di Sicurezza non</div><div class="t" style="left:1559px;top:506.19px;font-size:11px;color:#000;font-weight:700;letter-spacing:-0.05px">corretta o non rispondente alla normativa di riferimento.</div><div class="t" style="left:1559px;top:532.19px;font-size:11px;color:#000;font-weight:400;letter-spacing:0.28px">Certifico s.r.l. non si assume responsabilità per la compilazione di</div><div class="t" style="left:1559px;top:545.19px;font-size:11px;color:#000;font-weight:400;letter-spacing:0.28px">Schede di Istruzioni di Sicurezza con la procedura di classificazione</div><div class="t" style="left:1559px;top:558.19px;font-size:11px;color:#000;font-weight:400;letter-spacing:0.28px">in modalità avanzata.</div></body></html>
